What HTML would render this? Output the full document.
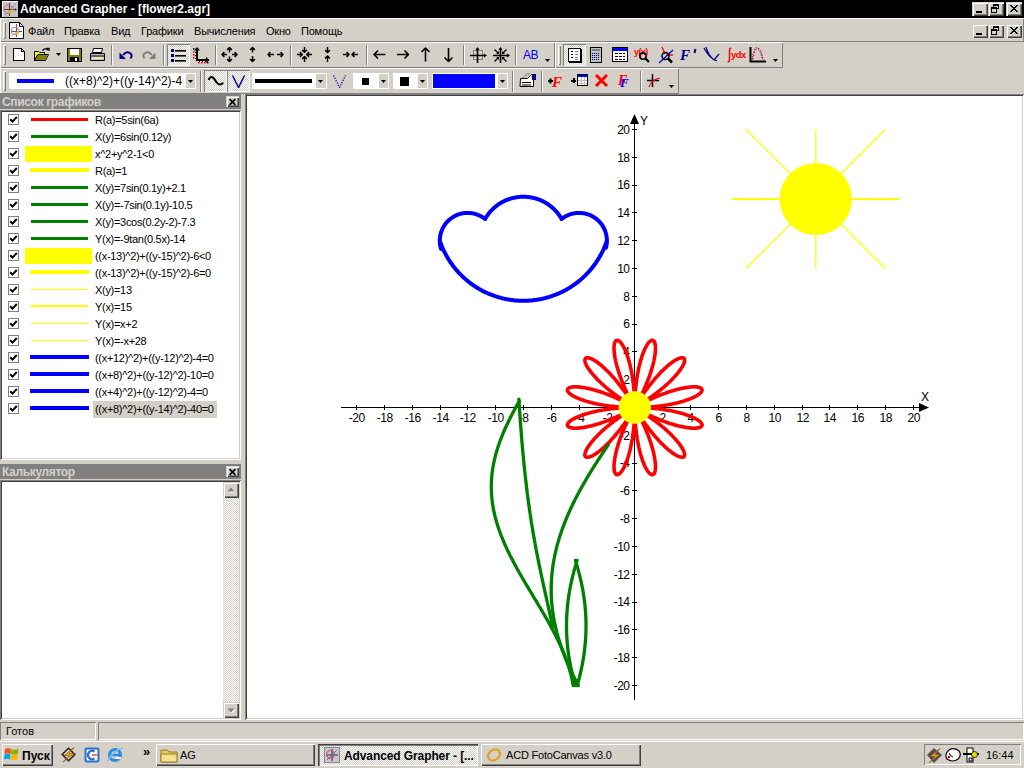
<!DOCTYPE html>
<html><head><meta charset="utf-8"><style>
html,body{margin:0;padding:0;}
body{width:1024px;height:768px;overflow:hidden;position:relative;background:#d4d0c8;font-family:'Liberation Sans', sans-serif;}
</style></head><body>
<div style="position:absolute;left:0px;top:0px;width:1024px;height:18px;background:#000;"></div><svg style="position:absolute;left:2px;top:1px" width="16" height="16" viewBox="0 0 16 16"><rect x="0" y="0" width="16" height="16" fill="#fff"/><rect x="1" y="1" width="15" height="15" fill="#c4c4c4"/><path d="M7.5 2v13M2 8.5h12" stroke="#404040" stroke-width="1"/><path d="M13 7l2 1.5l-2 1.5z" fill="#404040"/><circle cx="6" cy="8" r="4.2" fill="none" stroke="#e06080" stroke-width="1"/><path d="M3 14L14 3" stroke="#6060e0" stroke-width="1" stroke-dasharray="1 1"/><path d="M6 12L10.5 9" stroke="#f0c000" stroke-width="2"/></svg><div style="position:absolute;left:20px;top:2px;white-space:nowrap;font:bold 12px 'Liberation Sans', sans-serif;color:#fff;line-height:14px;">Advanced Grapher - [flower2.agr]</div><div style="position:absolute;left:972px;top:2px;width:16px;height:14px;background:#d4d0c8;box-shadow:inset 1px 1px #d4d0c8, inset 2px 2px #fff, inset -1px -1px #404040, inset -2px -2px #808080;"></div><div style="position:absolute;left:976px;top:11px;width:6px;height:2px;background:#000;"></div><div style="position:absolute;left:988px;top:2px;width:16px;height:14px;background:#d4d0c8;box-shadow:inset 1px 1px #d4d0c8, inset 2px 2px #fff, inset -1px -1px #404040, inset -2px -2px #808080;"></div><svg style="position:absolute;left:988px;top:2px" width="16" height="14" viewBox="0 0 16 14"><g shape-rendering="crispEdges" fill="#000"><rect x="5" y="2" width="6" height="2"/><rect x="10" y="4" width="1" height="3"/><rect x="9" y="6" width="2" height="1"/><rect x="3" y="5" width="6" height="2"/><rect x="3" y="7" width="1" height="4"/><rect x="8" y="7" width="1" height="4"/><rect x="3" y="10" width="6" height="1"/><rect x="5" y="4" width="1" height="1"/></g></svg><div style="position:absolute;left:1006px;top:2px;width:16px;height:14px;background:#d4d0c8;box-shadow:inset 1px 1px #d4d0c8, inset 2px 2px #fff, inset -1px -1px #404040, inset -2px -2px #808080;"></div><svg style="position:absolute;left:1006px;top:2px" width="16" height="14" viewBox="0 0 16 14"><path d="M4 3l7 7M11 3l-7 7M5 3l7 7M12 3l-7 7" stroke="#000" stroke-width="1"/></svg><div style="position:absolute;left:0px;top:18px;width:1024px;height:24px;box-shadow:inset 1px 1px #fff, inset -1px -1px #808080;background:#d4d0c8;"></div><div style="position:absolute;left:3px;top:22px;width:3px;height:17px;box-shadow:inset 1px 1px #fff, inset -1px -1px #808080;"></div><svg style="position:absolute;left:9px;top:22px" width="15" height="17" viewBox="0 0 15 17"><path d="M0.5 0.5h10l4 4v12h-14z" fill="#fff" stroke="#000"/><path d="M10.5 0.5v4h4" fill="none" stroke="#000"/><path d="M7.5 2v13M2 9.5h11" stroke="#406060" stroke-width="1"/><circle cx="6" cy="9" r="3.8" fill="none" stroke="#e06080"/><path d="M3 14l9-8" stroke="#a080ff" stroke-dasharray="1 1"/><path d="M6 12l4-2.5" stroke="#f0c000" stroke-width="2"/></svg><div style="position:absolute;left:28px;top:24px;white-space:nowrap;font:11px 'Liberation Sans', sans-serif;color:#000;letter-spacing:-0.2px;line-height:14px;">Файл</div><div style="position:absolute;left:64px;top:24px;white-space:nowrap;font:11px 'Liberation Sans', sans-serif;color:#000;letter-spacing:-0.2px;line-height:14px;">Правка</div><div style="position:absolute;left:111px;top:24px;white-space:nowrap;font:11px 'Liberation Sans', sans-serif;color:#000;letter-spacing:-0.2px;line-height:14px;">Вид</div><div style="position:absolute;left:141px;top:24px;white-space:nowrap;font:11px 'Liberation Sans', sans-serif;color:#000;letter-spacing:-0.2px;line-height:14px;">Графики</div><div style="position:absolute;left:194px;top:24px;white-space:nowrap;font:11px 'Liberation Sans', sans-serif;color:#000;letter-spacing:-0.2px;line-height:14px;">Вычисления</div><div style="position:absolute;left:266px;top:24px;white-space:nowrap;font:11px 'Liberation Sans', sans-serif;color:#000;letter-spacing:-0.2px;line-height:14px;">Окно</div><div style="position:absolute;left:301px;top:24px;white-space:nowrap;font:11px 'Liberation Sans', sans-serif;color:#000;letter-spacing:-0.2px;line-height:14px;">Помощь</div><div style="position:absolute;left:972px;top:24px;width:16px;height:14px;background:#d4d0c8;box-shadow:inset 1px 1px #d4d0c8, inset 2px 2px #fff, inset -1px -1px #404040, inset -2px -2px #808080;"></div><div style="position:absolute;left:976px;top:33px;width:6px;height:2px;background:#000;"></div><div style="position:absolute;left:988px;top:24px;width:16px;height:14px;background:#d4d0c8;box-shadow:inset 1px 1px #d4d0c8, inset 2px 2px #fff, inset -1px -1px #404040, inset -2px -2px #808080;"></div><svg style="position:absolute;left:988px;top:24px" width="16" height="14" viewBox="0 0 16 14"><g shape-rendering="crispEdges" fill="#000"><rect x="5" y="2" width="6" height="2"/><rect x="10" y="4" width="1" height="3"/><rect x="9" y="6" width="2" height="1"/><rect x="3" y="5" width="6" height="2"/><rect x="3" y="7" width="1" height="4"/><rect x="8" y="7" width="1" height="4"/><rect x="3" y="10" width="6" height="1"/><rect x="5" y="4" width="1" height="1"/></g></svg><div style="position:absolute;left:1006px;top:24px;width:16px;height:14px;background:#d4d0c8;box-shadow:inset 1px 1px #d4d0c8, inset 2px 2px #fff, inset -1px -1px #404040, inset -2px -2px #808080;"></div><svg style="position:absolute;left:1006px;top:24px" width="16" height="14" viewBox="0 0 16 14"><path d="M4 3l7 7M11 3l-7 7M5 3l7 7M12 3l-7 7" stroke="#000" stroke-width="1"/></svg><div style="position:absolute;left:0px;top:42px;width:555px;height:26px;box-shadow:inset 1px 1px #fff, inset -1px -1px #808080;background:#d4d0c8;"></div><div style="position:absolute;left:555px;top:42px;width:228px;height:26px;box-shadow:inset 1px 1px #fff, inset -1px -1px #808080;background:#d4d0c8;"></div><div style="position:absolute;left:3px;top:45px;width:3px;height:20px;box-shadow:inset 1px 1px #fff, inset -1px -1px #808080;"></div><div style="position:absolute;left:558px;top:45px;width:3px;height:20px;box-shadow:inset 1px 1px #fff, inset -1px -1px #808080;"></div><svg style="position:absolute;left:13px;top:48px" width="12" height="13" viewBox="0 0 12 13" shape-rendering="crispEdges"><path d="M0.5 0.5h8l3 3v9h-11z" fill="#fff" stroke="#000"/><path d="M8.5 0.5v3h3" fill="none" stroke="#000"/></svg><svg style="position:absolute;left:33px;top:47px" width="17" height="15" viewBox="0 0 17 15" ><path d="M1.5 4.5h4l1 1h5v2.5h-7l-3 5.5z" fill="#ffff00" stroke="#000"/><path d="M1.5 4.5v9h11l3-6h-10.5l-3.5 6" fill="none" stroke="#000"/><path d="M2.5 13l3-5h9.5l-2.8 5z" fill="#808000"/><path d="M9.5 3.5q2.5-3 5.5-0.5" fill="none" stroke="#000" stroke-width="1.3"/><path d="M13.5 1.5h2.5v2.5" fill="none" stroke="#000" stroke-width="1.3"/></svg><svg style="position:absolute;left:56px;top:53px" width="5" height="3" viewBox="0 0 5 3"><path d="M0,0h5l-2.5,3z" fill="#000"/></svg><svg style="position:absolute;left:67px;top:48px" width="15" height="14" viewBox="0 0 15 14" shape-rendering="crispEdges"><rect x="0.5" y="0.5" width="14" height="13" fill="#808000" stroke="#000"/><rect x="3" y="1" width="9" height="6" fill="#fff"/><rect x="3" y="9" width="9" height="4" fill="#000"/><rect x="8" y="10" width="2" height="3" fill="#fff"/></svg><svg style="position:absolute;left:89px;top:48px" width="17" height="14" viewBox="0 0 17 14" ><path d="M4.5 0.5h9l-1 4h-9z" fill="#fff" stroke="#000"/><path d="M1.5 5.5h14v7h-14z" fill="#c0c0c0" stroke="#000"/><path d="M2 8h13" stroke="#000"/><path d="M3 10h11" stroke="#fff"/><path d="M8 10h4" stroke="#ffff00"/><path d="M2 12.5h13" stroke="#000"/></svg><div style="position:absolute;left:111px;top:45px;width:1px;height:20px;background:#808080;"></div><div style="position:absolute;left:112px;top:45px;width:1px;height:20px;background:#fff;"></div><svg style="position:absolute;left:119px;top:50px" width="14" height="10" viewBox="0 0 14 10" ><path d="M4 5q4-5 8-1q1.5 2-0.5 4.5" fill="none" stroke="#000080" stroke-width="2"/><path d="M0.5 2.5v6.5h6.5z" fill="#000080"/></svg><svg style="position:absolute;left:142px;top:50px" width="14" height="10" viewBox="0 0 14 10" ><path d="M10 5q-4-5-8-1q-1.5 2 0.5 4.5" fill="none" stroke="#808080" stroke-width="2"/><path d="M13.5 2.5v6.5h-6.5z" fill="#808080"/></svg><div style="position:absolute;left:163px;top:45px;width:1px;height:20px;background:#808080;"></div><div style="position:absolute;left:164px;top:45px;width:1px;height:20px;background:#fff;"></div><div style="position:absolute;left:167px;top:44px;width:23px;height:22px;background-color:#fff;background-image:repeating-conic-gradient(#d4d0c8 0 25%, #fff 0 50%);background-size:2px 2px;box-shadow:inset 1px 1px #808080, inset -1px -1px #fff;"></div><svg style="position:absolute;left:171px;top:49px" width="15" height="13" viewBox="0 0 15 13" ><rect x="0" y="0" width="3" height="3" fill="#000080"/><rect x="0" y="5" width="3" height="3" fill="#000080"/><rect x="0" y="10" width="3" height="3" fill="#000080"/><rect x="4" y="1" width="11" height="1.6" fill="#000"/><rect x="4" y="6" width="11" height="1.6" fill="#000"/><rect x="4" y="11" width="11" height="1.6" fill="#000"/></svg><svg style="position:absolute;left:192px;top:46px" width="18" height="18" viewBox="0 0 18 18" ><rect x="4" y="2" width="2" height="13" fill="#000"/><rect x="4" y="13" width="13" height="2" fill="#000"/><path d="M2 4.5L5 1L8 4.5z M14 11l3.5 3l-3.5 3z" fill="#000"/><rect x="3" y="6" width="1" height="1" fill="#000"/><rect x="3" y="9" width="1" height="1" fill="#000"/><rect x="3" y="12" width="1" height="1" fill="#000"/><rect x="7" y="15" width="1" height="1" fill="#000"/><rect x="10" y="15" width="1" height="1" fill="#000"/><rect x="13" y="15" width="1" height="1" fill="#000"/><rect x="1" y="2" width="1.5" height="1.5" fill="#000080"/><rect x="1" y="5" width="1.5" height="1.5" fill="#ff0000"/><rect x="1" y="8" width="1.5" height="1.5" fill="#ff0000"/><rect x="1" y="11" width="1.5" height="1.5" fill="#ff0000"/><rect x="6" y="16" width="1.5" height="1.5" fill="#ff0000"/><rect x="9" y="16" width="1.5" height="1.5" fill="#ff0000"/><rect x="12" y="16" width="1.5" height="1.5" fill="#ff0000"/><rect x="15" y="16" width="1.5" height="1.5" fill="#000080"/></svg><div style="position:absolute;left:215px;top:45px;width:1px;height:20px;background:#808080;"></div><div style="position:absolute;left:216px;top:45px;width:1px;height:20px;background:#fff;"></div><svg style="position:absolute;left:0;top:0" width="1024" height="100"><path d="M229.50,52.50L229.50,48.10M231.90,49.90L229.50,47.50L227.10,49.90M229.50,56.50L229.50,60.90M227.10,59.10L229.50,61.50L231.90,59.10M227.00,54.50L222.60,54.50M224.40,52.10L222.00,54.50L224.40,56.90M232.00,54.50L236.40,54.50M234.60,56.90L237.00,54.50L234.60,52.10M252.50,52.50L252.50,48.10M254.90,49.90L252.50,47.50L250.10,49.90M252.50,56.00L252.50,60.90M250.10,59.10L252.50,61.50L254.90,59.10M274.00,54.50L268.60,54.50M270.40,52.10L268.00,54.50L270.40,56.90M277.00,54.50L282.40,54.50M280.60,56.90L283.00,54.50L280.60,52.10M304.50,47.00L304.50,51.70M302.10,49.90L304.50,52.30L306.90,49.90M304.50,62.00L304.50,57.10M306.90,58.90L304.50,56.50L302.10,58.90M297.00,54.50L301.70,54.50M299.90,56.90L302.30,54.50L299.90,52.10M312.00,54.50L307.30,54.50M309.10,52.10L306.70,54.50L309.10,56.90M327.50,47.00L327.50,51.90M325.10,50.10L327.50,52.50L329.90,50.10M327.50,62.00L327.50,56.60M329.90,58.40L327.50,56.00L325.10,58.40M343.00,54.50L348.40,54.50M346.60,56.90L349.00,54.50L346.60,52.10M358.00,54.50L352.60,54.50M354.40,52.10L352.00,54.50L354.40,56.90" fill="none" stroke="#000" stroke-width="1.5" stroke-linejoin="round" stroke-linecap="butt"/></svg><div style="position:absolute;left:290px;top:45px;width:1px;height:20px;background:#808080;"></div><div style="position:absolute;left:291px;top:45px;width:1px;height:20px;background:#fff;"></div><div style="position:absolute;left:366px;top:45px;width:1px;height:20px;background:#808080;"></div><div style="position:absolute;left:367px;top:45px;width:1px;height:20px;background:#fff;"></div><svg style="position:absolute;left:0;top:0" width="1024" height="100"><path d="M385.50,54.50L374.60,54.50M378.00,50.50L374.00,54.50L378.00,58.50M397.00,54.50L407.90,54.50M404.50,58.50L408.50,54.50L404.50,50.50M425.50,61.50L425.50,48.60M429.50,52.00L425.50,48.00L421.50,52.00M448.50,48.00L448.50,60.90M444.50,57.50L448.50,61.50L452.50,57.50" fill="none" stroke="#000" stroke-width="1.6" stroke-linejoin="round" stroke-linecap="butt"/></svg><div style="position:absolute;left:463px;top:45px;width:1px;height:20px;background:#808080;"></div><div style="position:absolute;left:464px;top:45px;width:1px;height:20px;background:#fff;"></div><svg style="position:absolute;left:466px;top:44px" width="48" height="22" viewBox="0 0 48 22" ><rect x="7.5" y="6.5" width="9" height="9" fill="none" stroke="#808080"/><path d="M11.5 4v15M4 11.5h15" stroke="#000" stroke-width="1.6"/><path d="M9.5 6l2-3l2 3zM18 9.5l3 2l-3 2z" fill="#000"/><path d="M34.5 4v15M27 11.5h15" stroke="#000" stroke-width="1.6"/><path d="M32.5 6l2-3l2 3zM41 9.5l3 2l-3 2z" fill="#000"/><path d="M28.5 5.5l4 4M40.5 5.5l-4 4M28.5 17.5l4-4M40.5 17.5l-4-4" stroke="#000" stroke-width="1.3"/><path d="M33 10l-3 0l3-3zM36 10l3 0l-3-3zM33 13l-3 0l3 3zM36 13l3 0l-3 3z" fill="#000"/></svg><div style="position:absolute;left:515px;top:45px;width:1px;height:20px;background:#808080;"></div><div style="position:absolute;left:516px;top:45px;width:1px;height:20px;background:#fff;"></div><div style="position:absolute;left:523px;top:48px;white-space:nowrap;font:12px 'Liberation Sans', sans-serif;color:#0000ff;line-height:14px;letter-spacing:-0.6px;">AB</div><svg style="position:absolute;left:545px;top:59px" width="5" height="3" viewBox="0 0 5 3"><path d="M0,0h5l-2.5,3z" fill="#000"/></svg><div style="position:absolute;left:563px;top:44px;width:23px;height:22px;background-color:#fff;background-image:repeating-conic-gradient(#d4d0c8 0 25%, #fff 0 50%);background-size:2px 2px;box-shadow:inset 1px 1px #808080, inset -1px -1px #fff;"></div><svg style="position:absolute;left:568px;top:48px" width="14" height="15" viewBox="0 0 14 15" shape-rendering="crispEdges"><rect x="0.5" y="0.5" width="12" height="13" fill="#fff" stroke="#000"/><rect x="13" y="1" width="1" height="14" fill="#000"/><rect x="1" y="14" width="13" height="1" fill="#000"/><path d="M3 3.5h2M3 6.5h2M3 9.5h2" stroke="#000"/><path d="M7 3.5h3M7 6.5h3M7 9.5h3M7 11.5h3" stroke="#808080"/></svg><svg style="position:absolute;left:590px;top:47px" width="12" height="16" viewBox="0 0 12 16" shape-rendering="crispEdges"><rect x="0.5" y="0.5" width="11" height="15" fill="#c0c0c0" stroke="#000"/><rect x="2" y="2" width="8" height="2" fill="#808080"/><path d="M2.5 6v8M4.5 6v8M6.5 6v8M8.5 6v8" stroke="#000080" stroke-dasharray="1 1"/></svg><svg style="position:absolute;left:612px;top:47px" width="16" height="15" viewBox="0 0 16 15" shape-rendering="crispEdges"><rect x="0.5" y="0.5" width="15" height="14" fill="#fff" stroke="#000"/><rect x="1" y="1" width="14" height="3" fill="#0000ff"/><path d="M3 6.5h3M7 6.5h3M11 6.5h2M3 9.5h3M7 9.5h3M11 9.5h2M3 12.5h3M7 12.5h3M11 12.5h2" stroke="#000"/></svg><svg style="position:absolute;left:634px;top:47px" width="17" height="16" viewBox="0 0 17 16" ><text x="0" y="8" font-family="Liberation Sans" font-size="9" font-weight="bold" fill="#ff0000" letter-spacing="-0.6">y(x)</text><circle cx="9" cy="9" r="3.2" fill="none" stroke="#000" stroke-width="1.5"/><path d="M11.5 11.5l3.5 3.5" stroke="#000" stroke-width="2.2"/></svg><svg style="position:absolute;left:658px;top:46px" width="16" height="18" viewBox="0 0 16 18" ><path d="M4 1l3 7M8 9l7 0" stroke="#ff0000" stroke-width="1.3"/><path d="M1 17L15 4" stroke="#0000ff" stroke-width="1.3"/><circle cx="7.5" cy="10" r="3.5" fill="none" stroke="#000" stroke-width="1.5"/><path d="M10 12.5l4 4" stroke="#000" stroke-width="2.5"/></svg><svg style="position:absolute;left:680px;top:47px" width="18" height="15" viewBox="0 0 18 15" ><text x="0" y="13" font-family="Liberation Serif" font-size="15" font-weight="bold" font-style="italic" fill="#000080">F</text><path d="M15.5 2l-1 4" stroke="#000080" stroke-width="2"/></svg><svg style="position:absolute;left:703px;top:46px" width="17" height="17" viewBox="0 0 17 17" ><path d="M1 2q5 10 13 13M3 1q2 8 8 13M11 14l5-6" fill="none" stroke="#000080" stroke-width="1.2"/></svg><svg style="position:absolute;left:726px;top:46px" width="22" height="17" viewBox="0 0 22 17" ><path d="M5.5 2.5q-1.5-1-2 1.5v10q-0.5 2.5-2 1.5" fill="none" stroke="#ff0000" stroke-width="1.5"/><text x="5" y="12" font-family="Liberation Sans" font-size="9.5" font-weight="bold" fill="#ff0000" letter-spacing="-0.5">ydx</text></svg><svg style="position:absolute;left:749px;top:47px" width="18" height="16" viewBox="0 0 18 16" ><path d="M1.5 0v14.5H17" fill="none" stroke="#000" stroke-width="2"/><path d="M3 13q2-13 5-12q4 0 6 12" fill="none" stroke="#ff0000" stroke-width="1.2" stroke-dasharray="1.5 1"/><path d="M4 12q2-10 4-10q3 0 5 10" fill="none" stroke="#0000ff" stroke-width="1" stroke-dasharray="1 2"/></svg><svg style="position:absolute;left:773px;top:59px" width="5" height="3" viewBox="0 0 5 3"><path d="M0,0h5l-2.5,3z" fill="#000"/></svg><div style="position:absolute;left:0px;top:68px;width:679px;height:26px;box-shadow:inset 1px 1px #fff, inset -1px -1px #808080;background:#d4d0c8;"></div><div style="position:absolute;left:3px;top:71px;width:3px;height:20px;box-shadow:inset 1px 1px #fff, inset -1px -1px #808080;"></div><div style="position:absolute;left:9px;top:73px;width:187px;height:16px;background:#fff;"></div><div style="position:absolute;left:17px;top:79px;width:37px;height:4px;background:#0000ff;"></div><div style="position:absolute;left:65px;top:74px;white-space:nowrap;font:12px 'Liberation Sans', sans-serif;color:#000;line-height:14px;letter-spacing:0px;">((x+8)^2)+((y-14)^2)-4</div><div style="position:absolute;left:186px;top:74px;width:9px;height:14px;background:#d4d0c8;"></div><svg style="position:absolute;left:188px;top:80px" width="5" height="3" viewBox="0 0 5 3"><path d="M0,0h5l-2.5,3z" fill="#000"/></svg><div style="position:absolute;left:196px;top:73px;width:0px;height:0px;"></div><div style="position:absolute;left:200px;top:71px;width:1px;height:21px;background:#808080;"></div><div style="position:absolute;left:201px;top:71px;width:1px;height:21px;background:#fff;"></div><div style="position:absolute;left:204px;top:70px;width:23px;height:22px;background-color:#fff;background-image:repeating-conic-gradient(#d4d0c8 0 25%, #fff 0 50%);background-size:2px 2px;box-shadow:inset 1px 1px #808080, inset -1px -1px #fff;"></div><div style="position:absolute;left:227px;top:70px;width:23px;height:22px;background-color:#fff;background-image:repeating-conic-gradient(#d4d0c8 0 25%, #fff 0 50%);background-size:2px 2px;box-shadow:inset 1px 1px #808080, inset -1px -1px #fff;"></div><svg style="position:absolute;left:207px;top:75px" width="17" height="12" viewBox="0 0 17 12" ><path d="M1.5 5q3-6 6.5 0t6.5 4q1 0 1.5-1.5" fill="none" stroke="#000" stroke-width="2"/></svg><svg style="position:absolute;left:231px;top:74px" width="15" height="14" viewBox="0 0 15 14" ><path d="M1.5 1.5l6 12l6-12" fill="none" stroke="#0000aa" stroke-width="1.5"/></svg><div style="position:absolute;left:252px;top:73px;width:75px;height:16px;background:#fff;"></div><div style="position:absolute;left:255px;top:79px;width:57px;height:4px;background:#000;"></div><div style="position:absolute;left:316px;top:74px;width:10px;height:14px;background:#d4d0c8;"></div><svg style="position:absolute;left:318px;top:80px" width="5" height="3" viewBox="0 0 5 3"><path d="M0,0h5l-2.5,3z" fill="#000"/></svg><svg style="position:absolute;left:332px;top:74px" width="15" height="14" viewBox="0 0 15 14" ><path d="M1.5 1.5l6 12l6-12" fill="none" stroke="#0000aa" stroke-width="1.3" stroke-dasharray="1.2 1.4"/></svg><div style="position:absolute;left:353px;top:73px;width:36px;height:16px;background:#fff;"></div><div style="position:absolute;left:362px;top:78px;width:7px;height:7px;background:#000;"></div><div style="position:absolute;left:379px;top:74px;width:9px;height:14px;background:#d4d0c8;"></div><svg style="position:absolute;left:381px;top:80px" width="5" height="3" viewBox="0 0 5 3"><path d="M0,0h5l-2.5,3z" fill="#000"/></svg><div style="position:absolute;left:393px;top:73px;width:35px;height:16px;background:#fff;"></div><div style="position:absolute;left:400px;top:77px;width:9px;height:9px;background:#000;"></div><div style="position:absolute;left:418px;top:74px;width:9px;height:14px;background:#d4d0c8;"></div><svg style="position:absolute;left:420px;top:80px" width="5" height="3" viewBox="0 0 5 3"><path d="M0,0h5l-2.5,3z" fill="#000"/></svg><div style="position:absolute;left:432px;top:73px;width:76px;height:16px;background:#fff;"></div><div style="position:absolute;left:433px;top:74px;width:62px;height:14px;background:#0000ff;"></div><div style="position:absolute;left:498px;top:74px;width:9px;height:14px;background:#d4d0c8;"></div><svg style="position:absolute;left:500px;top:80px" width="5" height="3" viewBox="0 0 5 3"><path d="M0,0h5l-2.5,3z" fill="#000"/></svg><div style="position:absolute;left:512px;top:71px;width:1px;height:21px;background:#808080;"></div><div style="position:absolute;left:513px;top:71px;width:1px;height:21px;background:#fff;"></div><svg style="position:absolute;left:519px;top:73px" width="17" height="15" viewBox="0 0 17 15" ><path d="M1.5 5.5h7l4-4h2v12h-13.5z" fill="#fff" stroke="#000"/><path d="M3 9.5h9M3 12h9" stroke="#000"/><path d="M4 5l5-5l4 4" fill="none" stroke="#808080" stroke-width="2" stroke-dasharray="1 1"/><rect x="13" y="1" width="4" height="6" fill="#000080"/></svg><div style="position:absolute;left:541px;top:71px;width:1px;height:21px;background:#808080;"></div><div style="position:absolute;left:542px;top:71px;width:1px;height:21px;background:#fff;"></div><svg style="position:absolute;left:547px;top:74px" width="18" height="14" viewBox="0 0 18 14" ><path d="M1 7h5M3.5 4.5v5" stroke="#000" stroke-width="2"/><text x="5" y="12.5" font-family="Liberation Serif" font-style="italic" font-weight="bold" font-size="15" fill="#ff0000">F</text></svg><svg style="position:absolute;left:570px;top:74px" width="18" height="13" viewBox="0 0 18 13" shape-rendering="crispEdges"><path d="M1 6.5h5M3.5 4v5" stroke="#000" stroke-width="2"/><rect x="7.5" y="0.5" width="10" height="11" fill="#fff" stroke="#000"/><rect x="8" y="1" width="9" height="2" fill="#0000ff"/><path d="M11 3v8M14 3v8M8 6.5h9M8 9h9" stroke="#c0c0c0"/></svg><svg style="position:absolute;left:594px;top:73px" width="15" height="15" viewBox="0 0 15 15" ><path d="M2 2l11 11M13 2l-11 11" stroke="#ff0000" stroke-width="3"/></svg><svg style="position:absolute;left:618px;top:74px" width="15" height="13" viewBox="0 0 15 13" ><text x="0" y="11" font-family="Liberation Serif" font-style="italic" font-weight="bold" font-size="14" fill="#ff0000">F</text><text x="2" y="13" font-family="Liberation Serif" font-style="italic" font-weight="bold" font-size="13" fill="#0000ff">F</text></svg><div style="position:absolute;left:640px;top:71px;width:1px;height:21px;background:#808080;"></div><div style="position:absolute;left:641px;top:71px;width:1px;height:21px;background:#fff;"></div><svg style="position:absolute;left:646px;top:73px" width="15" height="15" viewBox="0 0 15 15" ><path d="M6.5 1v13M1 7.5h12" stroke="#000" stroke-width="1.5"/><path d="M3 14q3-8 11-9" fill="none" stroke="#ff0000" stroke-width="1.2"/></svg><svg style="position:absolute;left:669px;top:85px" width="5" height="3" viewBox="0 0 5 3"><path d="M0,0h5l-2.5,3z" fill="#000"/></svg><div style="position:absolute;left:0px;top:93px;width:241px;height:16px;background:#808080;"></div><div style="position:absolute;left:2px;top:95px;white-space:nowrap;font:bold 12px 'Liberation Sans', sans-serif;color:#d4d0c8;line-height:14px;letter-spacing:-0.35px;">Список графиков</div><div style="position:absolute;left:226px;top:96px;width:13px;height:11px;background:#d4d0c8;box-shadow:inset 1px 1px #d4d0c8, inset 2px 2px #fff, inset -1px -1px #404040, inset -2px -2px #808080;"></div><svg style="position:absolute;left:226px;top:96px" width="13" height="11" viewBox="0 0 13 11"><path d="M3.6 3.2L9.4 8.8M9.4 3.2L3.6 8.8" stroke="#000" stroke-width="1.7"/></svg><div style="position:absolute;left:0px;top:110px;width:241px;height:350px;background:#fff;box-shadow:inset 1px 1px #808080, inset -1px -1px #fff, inset 2px 2px #404040, inset -2px -2px #d4d0c8;"></div><div style="position:absolute;left:8px;top:114px;width:11px;height:11px;box-sizing:border-box;border:1px solid #808080;background:#fff;"></div><svg style="position:absolute;left:8px;top:114px" width="11" height="11" viewBox="0 0 11 11"><path d="M2.2 5.2l2.3 2.4l4.3-4.6" fill="none" stroke="#000" stroke-width="2"/></svg><div style="position:absolute;left:31px;top:118px;width:57px;height:3px;background:#ff0000;"></div><div style="position:absolute;left:95px;top:113px;white-space:nowrap;font:11px 'Liberation Sans', sans-serif;color:#000;letter-spacing:-0.3px;line-height:14px;">R(a)=5sin(6a)</div><div style="position:absolute;left:8px;top:131px;width:11px;height:11px;box-sizing:border-box;border:1px solid #808080;background:#fff;"></div><svg style="position:absolute;left:8px;top:131px" width="11" height="11" viewBox="0 0 11 11"><path d="M2.2 5.2l2.3 2.4l4.3-4.6" fill="none" stroke="#000" stroke-width="2"/></svg><div style="position:absolute;left:31px;top:135px;width:57px;height:3px;background:#008000;"></div><div style="position:absolute;left:95px;top:130px;white-space:nowrap;font:11px 'Liberation Sans', sans-serif;color:#000;letter-spacing:-0.3px;line-height:14px;">X(y)=6sin(0.12y)</div><div style="position:absolute;left:8px;top:148px;width:11px;height:11px;box-sizing:border-box;border:1px solid #808080;background:#fff;"></div><svg style="position:absolute;left:8px;top:148px" width="11" height="11" viewBox="0 0 11 11"><path d="M2.2 5.2l2.3 2.4l4.3-4.6" fill="none" stroke="#000" stroke-width="2"/></svg><div style="position:absolute;left:25px;top:146px;width:67px;height:16px;background:#ffff00;"></div><div style="position:absolute;left:95px;top:147px;white-space:nowrap;font:11px 'Liberation Sans', sans-serif;color:#000;letter-spacing:-0.3px;line-height:14px;">x^2+y^2-1&lt;0</div><div style="position:absolute;left:8px;top:165px;width:11px;height:11px;box-sizing:border-box;border:1px solid #808080;background:#fff;"></div><svg style="position:absolute;left:8px;top:165px" width="11" height="11" viewBox="0 0 11 11"><path d="M2.2 5.2l2.3 2.4l4.3-4.6" fill="none" stroke="#000" stroke-width="2"/></svg><div style="position:absolute;left:30px;top:168px;width:59px;height:4px;background:#ffff00;"></div><div style="position:absolute;left:95px;top:164px;white-space:nowrap;font:11px 'Liberation Sans', sans-serif;color:#000;letter-spacing:-0.3px;line-height:14px;">R(a)=1</div><div style="position:absolute;left:8px;top:182px;width:11px;height:11px;box-sizing:border-box;border:1px solid #808080;background:#fff;"></div><svg style="position:absolute;left:8px;top:182px" width="11" height="11" viewBox="0 0 11 11"><path d="M2.2 5.2l2.3 2.4l4.3-4.6" fill="none" stroke="#000" stroke-width="2"/></svg><div style="position:absolute;left:31px;top:186px;width:57px;height:3px;background:#008000;"></div><div style="position:absolute;left:95px;top:181px;white-space:nowrap;font:11px 'Liberation Sans', sans-serif;color:#000;letter-spacing:-0.3px;line-height:14px;">X(y)=7sin(0.1y)+2.1</div><div style="position:absolute;left:8px;top:199px;width:11px;height:11px;box-sizing:border-box;border:1px solid #808080;background:#fff;"></div><svg style="position:absolute;left:8px;top:199px" width="11" height="11" viewBox="0 0 11 11"><path d="M2.2 5.2l2.3 2.4l4.3-4.6" fill="none" stroke="#000" stroke-width="2"/></svg><div style="position:absolute;left:31px;top:203px;width:57px;height:3px;background:#008000;"></div><div style="position:absolute;left:95px;top:198px;white-space:nowrap;font:11px 'Liberation Sans', sans-serif;color:#000;letter-spacing:-0.3px;line-height:14px;">X(y)=-7sin(0.1y)-10.5</div><div style="position:absolute;left:8px;top:216px;width:11px;height:11px;box-sizing:border-box;border:1px solid #808080;background:#fff;"></div><svg style="position:absolute;left:8px;top:216px" width="11" height="11" viewBox="0 0 11 11"><path d="M2.2 5.2l2.3 2.4l4.3-4.6" fill="none" stroke="#000" stroke-width="2"/></svg><div style="position:absolute;left:31px;top:220px;width:57px;height:3px;background:#008000;"></div><div style="position:absolute;left:95px;top:215px;white-space:nowrap;font:11px 'Liberation Sans', sans-serif;color:#000;letter-spacing:-0.3px;line-height:14px;">X(y)=3cos(0.2y-2)-7.3</div><div style="position:absolute;left:8px;top:233px;width:11px;height:11px;box-sizing:border-box;border:1px solid #808080;background:#fff;"></div><svg style="position:absolute;left:8px;top:233px" width="11" height="11" viewBox="0 0 11 11"><path d="M2.2 5.2l2.3 2.4l4.3-4.6" fill="none" stroke="#000" stroke-width="2"/></svg><div style="position:absolute;left:31px;top:237px;width:57px;height:3px;background:#008000;"></div><div style="position:absolute;left:95px;top:232px;white-space:nowrap;font:11px 'Liberation Sans', sans-serif;color:#000;letter-spacing:-0.3px;line-height:14px;">Y(x)=-9tan(0.5x)-14</div><div style="position:absolute;left:8px;top:250px;width:11px;height:11px;box-sizing:border-box;border:1px solid #808080;background:#fff;"></div><svg style="position:absolute;left:8px;top:250px" width="11" height="11" viewBox="0 0 11 11"><path d="M2.2 5.2l2.3 2.4l4.3-4.6" fill="none" stroke="#000" stroke-width="2"/></svg><div style="position:absolute;left:25px;top:248px;width:67px;height:16px;background:#ffff00;"></div><div style="position:absolute;left:95px;top:249px;white-space:nowrap;font:11px 'Liberation Sans', sans-serif;color:#000;letter-spacing:-0.3px;line-height:14px;">((x-13)^2)+((y-15)^2)-6&lt;0</div><div style="position:absolute;left:8px;top:267px;width:11px;height:11px;box-sizing:border-box;border:1px solid #808080;background:#fff;"></div><svg style="position:absolute;left:8px;top:267px" width="11" height="11" viewBox="0 0 11 11"><path d="M2.2 5.2l2.3 2.4l4.3-4.6" fill="none" stroke="#000" stroke-width="2"/></svg><div style="position:absolute;left:30px;top:270px;width:59px;height:4px;background:#ffff00;"></div><div style="position:absolute;left:95px;top:266px;white-space:nowrap;font:11px 'Liberation Sans', sans-serif;color:#000;letter-spacing:-0.3px;line-height:14px;">((x-13)^2)+((y-15)^2)-6=0</div><div style="position:absolute;left:8px;top:284px;width:11px;height:11px;box-sizing:border-box;border:1px solid #808080;background:#fff;"></div><svg style="position:absolute;left:8px;top:284px" width="11" height="11" viewBox="0 0 11 11"><path d="M2.2 5.2l2.3 2.4l4.3-4.6" fill="none" stroke="#000" stroke-width="2"/></svg><div style="position:absolute;left:31px;top:289px;width:57px;height:1px;background:#ffff00;"></div><div style="position:absolute;left:95px;top:283px;white-space:nowrap;font:11px 'Liberation Sans', sans-serif;color:#000;letter-spacing:-0.3px;line-height:14px;">X(y)=13</div><div style="position:absolute;left:8px;top:301px;width:11px;height:11px;box-sizing:border-box;border:1px solid #808080;background:#fff;"></div><svg style="position:absolute;left:8px;top:301px" width="11" height="11" viewBox="0 0 11 11"><path d="M2.2 5.2l2.3 2.4l4.3-4.6" fill="none" stroke="#000" stroke-width="2"/></svg><div style="position:absolute;left:31px;top:305px;width:57px;height:2px;background:#ffff00;"></div><div style="position:absolute;left:95px;top:300px;white-space:nowrap;font:11px 'Liberation Sans', sans-serif;color:#000;letter-spacing:-0.3px;line-height:14px;">Y(x)=15</div><div style="position:absolute;left:8px;top:318px;width:11px;height:11px;box-sizing:border-box;border:1px solid #808080;background:#fff;"></div><svg style="position:absolute;left:8px;top:318px" width="11" height="11" viewBox="0 0 11 11"><path d="M2.2 5.2l2.3 2.4l4.3-4.6" fill="none" stroke="#000" stroke-width="2"/></svg><div style="position:absolute;left:31px;top:323px;width:57px;height:1px;background:#ffff00;"></div><div style="position:absolute;left:95px;top:317px;white-space:nowrap;font:11px 'Liberation Sans', sans-serif;color:#000;letter-spacing:-0.3px;line-height:14px;">Y(x)=x+2</div><div style="position:absolute;left:8px;top:335px;width:11px;height:11px;box-sizing:border-box;border:1px solid #808080;background:#fff;"></div><svg style="position:absolute;left:8px;top:335px" width="11" height="11" viewBox="0 0 11 11"><path d="M2.2 5.2l2.3 2.4l4.3-4.6" fill="none" stroke="#000" stroke-width="2"/></svg><div style="position:absolute;left:31px;top:340px;width:57px;height:1px;background:#ffff00;"></div><div style="position:absolute;left:95px;top:334px;white-space:nowrap;font:11px 'Liberation Sans', sans-serif;color:#000;letter-spacing:-0.3px;line-height:14px;">Y(x)=-x+28</div><div style="position:absolute;left:8px;top:352px;width:11px;height:11px;box-sizing:border-box;border:1px solid #808080;background:#fff;"></div><svg style="position:absolute;left:8px;top:352px" width="11" height="11" viewBox="0 0 11 11"><path d="M2.2 5.2l2.3 2.4l4.3-4.6" fill="none" stroke="#000" stroke-width="2"/></svg><div style="position:absolute;left:30px;top:355px;width:59px;height:4px;background:#0000ff;"></div><div style="position:absolute;left:95px;top:351px;white-space:nowrap;font:11px 'Liberation Sans', sans-serif;color:#000;letter-spacing:-0.3px;line-height:14px;">((x+12)^2)+((y-12)^2)-4=0</div><div style="position:absolute;left:8px;top:369px;width:11px;height:11px;box-sizing:border-box;border:1px solid #808080;background:#fff;"></div><svg style="position:absolute;left:8px;top:369px" width="11" height="11" viewBox="0 0 11 11"><path d="M2.2 5.2l2.3 2.4l4.3-4.6" fill="none" stroke="#000" stroke-width="2"/></svg><div style="position:absolute;left:30px;top:372px;width:59px;height:4px;background:#0000ff;"></div><div style="position:absolute;left:95px;top:368px;white-space:nowrap;font:11px 'Liberation Sans', sans-serif;color:#000;letter-spacing:-0.3px;line-height:14px;">((x+8)^2)+((y-12)^2)-10=0</div><div style="position:absolute;left:8px;top:386px;width:11px;height:11px;box-sizing:border-box;border:1px solid #808080;background:#fff;"></div><svg style="position:absolute;left:8px;top:386px" width="11" height="11" viewBox="0 0 11 11"><path d="M2.2 5.2l2.3 2.4l4.3-4.6" fill="none" stroke="#000" stroke-width="2"/></svg><div style="position:absolute;left:30px;top:389px;width:59px;height:4px;background:#0000ff;"></div><div style="position:absolute;left:95px;top:385px;white-space:nowrap;font:11px 'Liberation Sans', sans-serif;color:#000;letter-spacing:-0.3px;line-height:14px;">((x+4)^2)+((y-12)^2)-4=0</div><div style="position:absolute;left:8px;top:403px;width:11px;height:11px;box-sizing:border-box;border:1px solid #808080;background:#fff;"></div><svg style="position:absolute;left:8px;top:403px" width="11" height="11" viewBox="0 0 11 11"><path d="M2.2 5.2l2.3 2.4l4.3-4.6" fill="none" stroke="#000" stroke-width="2"/></svg><div style="position:absolute;left:30px;top:406px;width:59px;height:4px;background:#0000ff;"></div><div style="position:absolute;left:93px;top:401px;width:124px;height:17px;background:#d4d0c8;"></div><div style="position:absolute;left:95px;top:402px;white-space:nowrap;font:11px 'Liberation Sans', sans-serif;color:#000;letter-spacing:-0.3px;line-height:14px;">((x+8)^2)+((y-14)^2)-40=0</div><div style="position:absolute;left:0px;top:464px;width:241px;height:15px;background:#808080;"></div><div style="position:absolute;left:2px;top:465px;white-space:nowrap;font:bold 12px 'Liberation Sans', sans-serif;color:#d4d0c8;line-height:14px;letter-spacing:-0.35px;">Калькулятор</div><div style="position:absolute;left:226px;top:466px;width:13px;height:11px;background:#d4d0c8;box-shadow:inset 1px 1px #d4d0c8, inset 2px 2px #fff, inset -1px -1px #404040, inset -2px -2px #808080;"></div><svg style="position:absolute;left:226px;top:466px" width="13" height="11" viewBox="0 0 13 11"><path d="M3.6 3.2L9.4 8.8M9.4 3.2L3.6 8.8" stroke="#000" stroke-width="1.7"/></svg><div style="position:absolute;left:0px;top:480px;width:241px;height:240px;background:#fff;box-shadow:inset 1px 1px #808080, inset -1px -1px #fff, inset 2px 2px #404040, inset -2px -2px #d4d0c8;"></div><div style="position:absolute;left:223px;top:482px;width:16px;height:236px;background-color:#fff;background-image:repeating-conic-gradient(#d4d0c8 0 25%, #fff 0 50%);background-size:2px 2px;"></div><div style="position:absolute;left:223px;top:482px;width:16px;height:16px;background:#d4d0c8;box-shadow:inset 1px 1px #d4d0c8, inset 2px 2px #fff, inset -1px -1px #404040, inset -2px -2px #808080;"></div><svg style="position:absolute;left:223px;top:482px" width="16" height="16" viewBox="0 0 16 16"><path d="M5.5 10.5h7l-3.5-4z" fill="#fff"/><path d="M4.5 9.5h7l-3.5-4z" fill="#808080"/></svg><div style="position:absolute;left:223px;top:702px;width:16px;height:16px;background:#d4d0c8;box-shadow:inset 1px 1px #d4d0c8, inset 2px 2px #fff, inset -1px -1px #404040, inset -2px -2px #808080;"></div><svg style="position:absolute;left:223px;top:702px" width="16" height="16" viewBox="0 0 16 16"><path d="M5.5 7.5h7l-3.5 4z" fill="#fff"/><path d="M4.5 6.5h7l-3.5 4z" fill="#808080"/></svg><div style="position:absolute;left:245px;top:94px;width:779px;height:626px;background:#fff;box-shadow:inset 1px 1px #808080, inset -1px -1px #fff, inset 2px 2px #404040, inset -2px -2px #d4d0c8;"></div><svg style="position:absolute;left:0;top:0" width="1024" height="768"><defs><clipPath id="gc"><rect x="247" y="96" width="775" height="622"/></clipPath></defs><g clip-path="url(#gc)"><g font-family="Liberation Sans, sans-serif" font-size="12px" letter-spacing="-0.5" fill="#000"><text x="356.7" y="422" text-anchor="middle">-20</text><text x="629.5" y="689.8" text-anchor="end">-20</text><text x="384.7" y="422" text-anchor="middle">-18</text><text x="629.5" y="662.0" text-anchor="end">-18</text><text x="412.7" y="422" text-anchor="middle">-16</text><text x="629.5" y="634.2" text-anchor="end">-16</text><text x="440.7" y="422" text-anchor="middle">-14</text><text x="629.5" y="606.4" text-anchor="end">-14</text><text x="467.7" y="422" text-anchor="middle">-12</text><text x="629.5" y="578.6" text-anchor="end">-12</text><text x="495.7" y="422" text-anchor="middle">-10</text><text x="629.5" y="550.8" text-anchor="end">-10</text><text x="523.7" y="422" text-anchor="middle">-8</text><text x="629.5" y="523.0" text-anchor="end">-8</text><text x="551.7" y="422" text-anchor="middle">-6</text><text x="629.5" y="495.2" text-anchor="end">-6</text><text x="579.7" y="422" text-anchor="middle">-4</text><text x="629.5" y="467.4" text-anchor="end">-4</text><text x="607.7" y="422" text-anchor="middle">-2</text><text x="629.5" y="439.6" text-anchor="end">-2</text><text x="662.7" y="422" text-anchor="middle">2</text><text x="629.5" y="384.0" text-anchor="end">2</text><text x="690.7" y="422" text-anchor="middle">4</text><text x="629.5" y="356.2" text-anchor="end">4</text><text x="718.7" y="422" text-anchor="middle">6</text><text x="629.5" y="328.4" text-anchor="end">6</text><text x="746.7" y="422" text-anchor="middle">8</text><text x="629.5" y="300.6" text-anchor="end">8</text><text x="774.7" y="422" text-anchor="middle">10</text><text x="629.5" y="272.8" text-anchor="end">10</text><text x="802.7" y="422" text-anchor="middle">12</text><text x="629.5" y="245.0" text-anchor="end">12</text><text x="829.7" y="422" text-anchor="middle">14</text><text x="629.5" y="217.2" text-anchor="end">14</text><text x="857.7" y="422" text-anchor="middle">16</text><text x="629.5" y="189.4" text-anchor="end">16</text><text x="885.7" y="422" text-anchor="middle">18</text><text x="629.5" y="161.6" text-anchor="end">18</text><text x="913.7" y="422" text-anchor="middle">20</text><text x="629.5" y="133.8" text-anchor="end">20</text><text x="921" y="401">X</text><text x="640" y="124.5">Y</text></g><path d="M341,407.5H921M634.5,700V122" stroke="#000" stroke-width="1" fill="none"/><path d="M919,403L929,407.5L919,412z" fill="#000"/><path d="M630,124L634.5,114L639,124z" fill="#000"/><path d="M356.5,405V410M632,685.5H637M384.5,405V410M632,657.5H637M412.5,405V410M632,629.5H637M440.5,405V410M632,602.5H637M467.5,405V410M632,574.5H637M495.5,405V410M632,546.5H637M523.5,405V410M632,518.5H637M551.5,405V410M632,490.5H637M579.5,405V410M632,463.5H637M607.5,405V410M632,435.5H637M662.5,405V410M632,379.5H637M690.5,405V410M632,351.5H637M718.5,405V410M632,324.5H637M746.5,405V410M632,296.5H637M774.5,405V410M632,268.5H637M802.5,405V410M632,240.5H637M829.5,405V410M632,212.5H637M857.5,405V410M632,185.5H637M885.5,405V410M632,157.5H637M913.5,405V410M632,129.5H637" stroke="#000" stroke-width="1"/><path d="M634.8,407.5L636.6,407.5L638.4,407.5L640.2,407.4L642.0,407.4L643.8,407.3L645.6,407.2L647.4,407.1L649.2,407.0L651.0,406.9L652.8,406.7L654.5,406.6L656.2,406.4L658.0,406.2L659.7,406.0L661.3,405.8L663.0,405.5L664.6,405.3L666.3,405.0L667.9,404.8L669.4,404.5L671.0,404.2L672.5,403.9L674.0,403.6L675.5,403.2L676.9,402.9L678.3,402.5L679.7,402.2L681.0,401.8L682.3,401.5L683.6,401.1L684.8,400.7L686.0,400.3L687.1,399.9L688.3,399.5L689.3,399.1L690.4,398.7L691.4,398.3L692.3,397.9L693.3,397.5L694.1,397.0L695.0,396.6L695.7,396.2L696.5,395.8L697.2,395.4L697.8,395.0L698.4,394.6L699.0,394.2L699.5,393.8L700.0,393.4L700.4,393.0L700.8,392.6L701.1,392.2L701.4,391.8L701.6,391.5L701.8,391.1L701.9,390.8L702.0,390.4L702.1,390.1L702.1,389.8L702.0,389.5L701.9,389.2L701.8,389.0L701.6,388.7L701.3,388.4L701.0,388.2L700.7,388.0L700.3,387.8L699.9,387.6L699.4,387.5L698.9,387.3L698.3,387.2L697.7,387.1L697.1,387.0L696.4,386.9L695.7,386.9L694.9,386.8L694.1,386.8L693.2,386.8L692.3,386.9L691.4,386.9L690.4,387.0L689.4,387.1L688.4,387.2L687.3,387.4L686.2,387.5L685.1,387.7L683.9,387.9L682.7,388.2L681.5,388.4L680.2,388.7L678.9,389.0L677.6,389.3L676.3,389.7L674.9,390.1L673.5,390.5L672.1,390.9L670.7,391.3L669.3,391.8L667.8,392.3L666.3,392.8L664.8,393.4L663.3,393.9L661.7,394.5L660.2,395.1L658.6,395.7L657.1,396.4L655.5,397.1L653.9,397.7L652.3,398.5L650.7,399.2L649.1,399.9L647.5,400.7L645.9,401.5L644.3,402.3L642.7,403.1L641.1,404.0L639.5,404.8L637.9,405.7L636.3,406.6L634.8,407.5L633.2,408.4L631.6,409.3L630.1,410.3L628.5,411.2L627.0,412.2L625.5,413.2L624.0,414.2L622.5,415.2L621.0,416.2L619.6,417.2L618.1,418.2L616.7,419.2L615.3,420.2L613.9,421.2L612.6,422.3L611.3,423.3L610.0,424.3L608.7,425.4L607.5,426.4L606.2,427.4L605.0,428.5L603.9,429.5L602.7,430.5L601.6,431.5L600.6,432.5L599.5,433.5L598.5,434.5L597.5,435.5L596.6,436.5L595.7,437.4L594.8,438.4L594.0,439.3L593.2,440.2L592.4,441.1L591.7,442.0L591.0,442.9L590.3,443.7L589.7,444.6L589.1,445.4L588.6,446.2L588.0,447.0L587.6,447.7L587.1,448.4L586.7,449.2L586.4,449.8L586.1,450.5L585.8,451.1L585.5,451.7L585.3,452.3L585.2,452.9L585.0,453.4L584.9,453.9L584.9,454.3L584.9,454.8L584.9,455.1L584.9,455.5L585.0,455.8L585.2,456.1L585.3,456.4L585.5,456.6L585.7,456.8L586.0,457.0L586.3,457.1L586.6,457.2L587.0,457.3L587.4,457.3L587.8,457.3L588.3,457.2L588.8,457.1L589.3,457.0L589.9,456.8L590.4,456.6L591.0,456.4L591.7,456.1L592.3,455.8L593.0,455.4L593.7,455.0L594.5,454.6L595.2,454.1L596.0,453.6L596.8,453.1L597.6,452.5L598.4,451.9L599.3,451.2L600.2,450.5L601.1,449.8L602.0,449.0L602.9,448.2L603.8,447.4L604.8,446.5L605.7,445.6L606.7,444.6L607.7,443.7L608.7,442.7L609.7,441.6L610.7,440.5L611.7,439.4L612.7,438.3L613.8,437.2L614.8,436.0L615.8,434.7L616.8,433.5L617.9,432.2L618.9,430.9L619.9,429.6L621.0,428.3L622.0,426.9L623.0,425.5L624.1,424.1L625.1,422.7L626.1,421.2L627.1,419.8L628.1,418.3L629.1,416.8L630.0,415.3L631.0,413.7L632.0,412.2L632.9,410.6L633.8,409.1L634.8,407.5L635.7,405.9L636.5,404.3L637.4,402.7L638.3,401.1L639.1,399.5L639.9,397.9L640.8,396.3L641.5,394.7L642.3,393.1L643.1,391.5L643.8,390.0L644.5,388.4L645.2,386.8L645.9,385.2L646.5,383.6L647.2,382.1L647.8,380.6L648.4,379.0L648.9,377.5L649.5,376.0L650.0,374.5L650.5,373.1L650.9,371.6L651.4,370.2L651.8,368.8L652.2,367.4L652.6,366.0L653.0,364.7L653.3,363.4L653.6,362.1L653.9,360.8L654.1,359.6L654.4,358.4L654.6,357.2L654.8,356.1L654.9,355.0L655.1,353.9L655.2,352.9L655.3,351.9L655.4,350.9L655.4,350.0L655.5,349.1L655.5,348.3L655.5,347.5L655.4,346.7L655.4,346.0L655.3,345.3L655.2,344.6L655.1,344.0L655.0,343.5L654.8,343.0L654.7,342.5L654.5,342.1L654.3,341.7L654.1,341.3L653.8,341.1L653.6,340.8L653.3,340.6L653.1,340.5L652.8,340.4L652.5,340.3L652.2,340.3L651.8,340.3L651.5,340.4L651.2,340.6L650.8,340.8L650.4,341.0L650.1,341.3L649.7,341.6L649.3,342.0L648.9,342.4L648.5,342.8L648.1,343.4L647.7,343.9L647.3,344.5L646.9,345.2L646.5,345.9L646.1,346.6L645.6,347.4L645.2,348.2L644.8,349.1L644.4,350.0L644.0,351.0L643.6,352.0L643.2,353.0L642.7,354.1L642.3,355.2L642.0,356.4L641.6,357.5L641.2,358.8L640.8,360.0L640.4,361.3L640.1,362.7L639.7,364.0L639.4,365.4L639.0,366.9L638.7,368.3L638.4,369.8L638.1,371.3L637.8,372.9L637.5,374.5L637.2,376.0L637.0,377.7L636.7,379.3L636.5,381.0L636.3,382.6L636.1,384.3L635.9,386.1L635.7,387.8L635.5,389.5L635.4,391.3L635.3,393.1L635.1,394.8L635.0,396.6L634.9,398.4L634.9,400.2L634.8,402.0L634.8,403.9L634.8,405.7L634.8,407.5L634.8,409.3L634.8,411.1L634.8,413.0L634.9,414.8L634.9,416.6L635.0,418.4L635.1,420.2L635.3,421.9L635.4,423.7L635.5,425.5L635.7,427.2L635.9,428.9L636.1,430.7L636.3,432.4L636.5,434.0L636.7,435.7L637.0,437.3L637.2,439.0L637.5,440.5L637.8,442.1L638.1,443.7L638.4,445.2L638.7,446.7L639.0,448.1L639.4,449.6L639.7,451.0L640.1,452.3L640.4,453.7L640.8,455.0L641.2,456.2L641.6,457.5L642.0,458.6L642.3,459.8L642.7,460.9L643.2,462.0L643.6,463.0L644.0,464.0L644.4,465.0L644.8,465.9L645.2,466.8L645.6,467.6L646.1,468.4L646.5,469.1L646.9,469.8L647.3,470.5L647.7,471.1L648.1,471.6L648.5,472.2L648.9,472.6L649.3,473.0L649.7,473.4L650.1,473.7L650.4,474.0L650.8,474.2L651.2,474.4L651.5,474.6L651.8,474.7L652.2,474.7L652.5,474.7L652.8,474.6L653.1,474.5L653.3,474.4L653.6,474.2L653.8,473.9L654.1,473.7L654.3,473.3L654.5,472.9L654.7,472.5L654.8,472.0L655.0,471.5L655.1,471.0L655.2,470.4L655.3,469.7L655.4,469.0L655.4,468.3L655.5,467.5L655.5,466.7L655.5,465.9L655.4,465.0L655.4,464.1L655.3,463.1L655.2,462.1L655.1,461.1L654.9,460.0L654.8,458.9L654.6,457.8L654.4,456.6L654.1,455.4L653.9,454.2L653.6,452.9L653.3,451.6L653.0,450.3L652.6,449.0L652.2,447.6L651.8,446.2L651.4,444.8L650.9,443.4L650.5,441.9L650.0,440.5L649.5,439.0L648.9,437.5L648.4,436.0L647.8,434.4L647.2,432.9L646.5,431.4L645.9,429.8L645.2,428.2L644.5,426.6L643.8,425.0L643.1,423.5L642.3,421.9L641.5,420.3L640.8,418.7L639.9,417.1L639.1,415.5L638.3,413.9L637.4,412.3L636.5,410.7L635.7,409.1L634.8,407.5L633.8,405.9L632.9,404.4L632.0,402.8L631.0,401.3L630.0,399.7L629.1,398.2L628.1,396.7L627.1,395.2L626.1,393.8L625.1,392.3L624.1,390.9L623.0,389.5L622.0,388.1L621.0,386.7L619.9,385.4L618.9,384.1L617.9,382.8L616.8,381.5L615.8,380.3L614.8,379.0L613.8,377.8L612.7,376.7L611.7,375.6L610.7,374.5L609.7,373.4L608.7,372.3L607.7,371.3L606.7,370.4L605.7,369.4L604.8,368.5L603.8,367.6L602.9,366.8L602.0,366.0L601.1,365.2L600.2,364.5L599.3,363.8L598.4,363.1L597.6,362.5L596.8,361.9L596.0,361.4L595.2,360.9L594.5,360.4L593.7,360.0L593.0,359.6L592.3,359.2L591.7,358.9L591.0,358.6L590.4,358.4L589.9,358.2L589.3,358.0L588.8,357.9L588.3,357.8L587.8,357.7L587.4,357.7L587.0,357.7L586.6,357.8L586.3,357.9L586.0,358.0L585.7,358.2L585.5,358.4L585.3,358.6L585.2,358.9L585.0,359.2L584.9,359.5L584.9,359.9L584.9,360.2L584.9,360.7L584.9,361.1L585.0,361.6L585.2,362.1L585.3,362.7L585.5,363.3L585.8,363.9L586.1,364.5L586.4,365.2L586.7,365.8L587.1,366.6L587.6,367.3L588.0,368.0L588.6,368.8L589.1,369.6L589.7,370.4L590.3,371.3L591.0,372.1L591.7,373.0L592.4,373.9L593.2,374.8L594.0,375.7L594.8,376.6L595.7,377.6L596.6,378.5L597.5,379.5L598.5,380.5L599.5,381.5L600.6,382.5L601.6,383.5L602.7,384.5L603.9,385.5L605.0,386.5L606.2,387.6L607.5,388.6L608.7,389.6L610.0,390.7L611.3,391.7L612.6,392.7L613.9,393.8L615.3,394.8L616.7,395.8L618.1,396.8L619.6,397.8L621.0,398.8L622.5,399.8L624.0,400.8L625.5,401.8L627.0,402.8L628.5,403.8L630.1,404.7L631.6,405.7L633.2,406.6L634.8,407.5L636.3,408.4L637.9,409.3L639.5,410.2L641.1,411.0L642.7,411.9L644.3,412.7L645.9,413.5L647.5,414.3L649.1,415.1L650.7,415.8L652.3,416.5L653.9,417.3L655.5,417.9L657.1,418.6L658.6,419.3L660.2,419.9L661.7,420.5L663.3,421.1L664.8,421.6L666.3,422.2L667.8,422.7L669.3,423.2L670.7,423.7L672.1,424.1L673.5,424.5L674.9,424.9L676.3,425.3L677.6,425.7L678.9,426.0L680.2,426.3L681.5,426.6L682.7,426.8L683.9,427.1L685.1,427.3L686.2,427.5L687.3,427.6L688.4,427.8L689.4,427.9L690.4,428.0L691.4,428.1L692.3,428.1L693.2,428.2L694.1,428.2L694.9,428.2L695.7,428.1L696.4,428.1L697.1,428.0L697.7,427.9L698.3,427.8L698.9,427.7L699.4,427.5L699.9,427.4L700.3,427.2L700.7,427.0L701.0,426.8L701.3,426.6L701.6,426.3L701.8,426.0L701.9,425.8L702.0,425.5L702.1,425.2L702.1,424.9L702.0,424.6L701.9,424.2L701.8,423.9L701.6,423.5L701.4,423.2L701.1,422.8L700.8,422.4L700.4,422.0L700.0,421.6L699.5,421.2L699.0,420.8L698.4,420.4L697.8,420.0L697.2,419.6L696.5,419.2L695.7,418.8L695.0,418.4L694.1,418.0L693.3,417.5L692.3,417.1L691.4,416.7L690.4,416.3L689.3,415.9L688.3,415.5L687.1,415.1L686.0,414.7L684.8,414.3L683.6,413.9L682.3,413.5L681.0,413.2L679.7,412.8L678.3,412.5L676.9,412.1L675.5,411.8L674.0,411.4L672.5,411.1L671.0,410.8L669.4,410.5L667.9,410.2L666.3,410.0L664.6,409.7L663.0,409.5L661.3,409.2L659.7,409.0L658.0,408.8L656.2,408.6L654.5,408.4L652.8,408.3L651.0,408.1L649.2,408.0L647.4,407.9L645.6,407.8L643.8,407.7L642.0,407.6L640.2,407.6L638.4,407.5L636.6,407.5L634.8,407.5L632.9,407.5L631.1,407.5L629.3,407.6L627.5,407.6L625.7,407.7L623.9,407.8L622.1,407.9L620.3,408.0L618.5,408.1L616.7,408.3L615.0,408.4L613.3,408.6L611.5,408.8L609.8,409.0L608.2,409.2L606.5,409.5L604.9,409.7L603.2,410.0L601.6,410.2L600.1,410.5L598.5,410.8L597.0,411.1L595.5,411.4L594.0,411.8L592.6,412.1L591.2,412.5L589.8,412.8L588.5,413.2L587.2,413.5L585.9,413.9L584.7,414.3L583.5,414.7L582.4,415.1L581.2,415.5L580.2,415.9L579.1,416.3L578.1,416.7L577.2,417.1L576.2,417.5L575.4,418.0L574.5,418.4L573.8,418.8L573.0,419.2L572.3,419.6L571.7,420.0L571.1,420.4L570.5,420.8L570.0,421.2L569.5,421.6L569.1,422.0L568.7,422.4L568.4,422.8L568.1,423.2L567.9,423.5L567.7,423.9L567.6,424.2L567.5,424.6L567.4,424.9L567.4,425.2L567.5,425.5L567.6,425.8L567.7,426.0L567.9,426.3L568.2,426.6L568.5,426.8L568.8,427.0L569.2,427.2L569.6,427.4L570.1,427.5L570.6,427.7L571.2,427.8L571.8,427.9L572.4,428.0L573.1,428.1L573.8,428.1L574.6,428.2L575.4,428.2L576.3,428.2L577.2,428.1L578.1,428.1L579.1,428.0L580.1,427.9L581.1,427.8L582.2,427.6L583.3,427.5L584.4,427.3L585.6,427.1L586.8,426.8L588.0,426.6L589.3,426.3L590.6,426.0L591.9,425.7L593.2,425.3L594.6,424.9L596.0,424.5L597.4,424.1L598.8,423.7L600.2,423.2L601.7,422.7L603.2,422.2L604.7,421.6L606.2,421.1L607.8,420.5L609.3,419.9L610.9,419.3L612.4,418.6L614.0,417.9L615.6,417.3L617.2,416.5L618.8,415.8L620.4,415.1L622.0,414.3L623.6,413.5L625.2,412.7L626.8,411.9L628.4,411.0L630.0,410.2L631.6,409.3L633.2,408.4L634.8,407.5L636.3,406.6L637.9,405.7L639.4,404.7L641.0,403.8L642.5,402.8L644.0,401.8L645.5,400.8L647.0,399.8L648.5,398.8L649.9,397.8L651.4,396.8L652.8,395.8L654.2,394.8L655.6,393.8L656.9,392.7L658.2,391.7L659.5,390.7L660.8,389.6L662.0,388.6L663.3,387.6L664.5,386.5L665.6,385.5L666.8,384.5L667.9,383.5L668.9,382.5L670.0,381.5L671.0,380.5L672.0,379.5L672.9,378.5L673.8,377.6L674.7,376.6L675.5,375.7L676.3,374.8L677.1,373.9L677.8,373.0L678.5,372.1L679.2,371.3L679.8,370.4L680.4,369.6L680.9,368.8L681.5,368.0L681.9,367.3L682.4,366.6L682.8,365.8L683.1,365.2L683.4,364.5L683.7,363.9L684.0,363.3L684.2,362.7L684.3,362.1L684.5,361.6L684.6,361.1L684.6,360.7L684.6,360.2L684.6,359.9L684.6,359.5L684.5,359.2L684.3,358.9L684.2,358.6L684.0,358.4L683.8,358.2L683.5,358.0L683.2,357.9L682.9,357.8L682.5,357.7L682.1,357.7L681.7,357.7L681.2,357.8L680.7,357.9L680.2,358.0L679.6,358.2L679.1,358.4L678.5,358.6L677.8,358.9L677.2,359.2L676.5,359.6L675.8,360.0L675.0,360.4L674.3,360.9L673.5,361.4L672.7,361.9L671.9,362.5L671.1,363.1L670.2,363.8L669.3,364.5L668.4,365.2L667.5,366.0L666.6,366.8L665.7,367.6L664.7,368.5L663.8,369.4L662.8,370.4L661.8,371.3L660.8,372.3L659.8,373.4L658.8,374.5L657.8,375.6L656.8,376.7L655.7,377.8L654.7,379.0L653.7,380.3L652.7,381.5L651.6,382.8L650.6,384.1L649.6,385.4L648.5,386.7L647.5,388.1L646.5,389.5L645.4,390.9L644.4,392.3L643.4,393.8L642.4,395.2L641.4,396.7L640.4,398.2L639.5,399.7L638.5,401.3L637.5,402.8L636.6,404.4L635.7,405.9L634.8,407.5L633.8,409.1L633.0,410.7L632.1,412.3L631.2,413.9L630.4,415.5L629.6,417.1L628.7,418.7L628.0,420.3L627.2,421.9L626.4,423.5L625.7,425.0L625.0,426.6L624.3,428.2L623.6,429.8L623.0,431.4L622.3,432.9L621.7,434.4L621.1,436.0L620.6,437.5L620.0,439.0L619.5,440.5L619.0,441.9L618.6,443.4L618.1,444.8L617.7,446.2L617.3,447.6L616.9,449.0L616.5,450.3L616.2,451.6L615.9,452.9L615.6,454.2L615.4,455.4L615.1,456.6L614.9,457.8L614.7,458.9L614.6,460.0L614.4,461.1L614.3,462.1L614.2,463.1L614.1,464.1L614.1,465.0L614.0,465.9L614.0,466.7L614.0,467.5L614.1,468.3L614.1,469.0L614.2,469.7L614.3,470.4L614.4,471.0L614.5,471.5L614.7,472.0L614.8,472.5L615.0,472.9L615.2,473.3L615.4,473.7L615.7,473.9L615.9,474.2L616.2,474.4L616.4,474.5L616.7,474.6L617.0,474.7L617.3,474.7L617.7,474.7L618.0,474.6L618.3,474.4L618.7,474.2L619.1,474.0L619.4,473.7L619.8,473.4L620.2,473.0L620.6,472.6L621.0,472.2L621.4,471.6L621.8,471.1L622.2,470.5L622.6,469.8L623.0,469.1L623.4,468.4L623.9,467.6L624.3,466.8L624.7,465.9L625.1,465.0L625.5,464.0L625.9,463.0L626.3,462.0L626.8,460.9L627.2,459.8L627.5,458.6L627.9,457.5L628.3,456.2L628.7,455.0L629.1,453.7L629.4,452.3L629.8,451.0L630.1,449.6L630.5,448.1L630.8,446.7L631.1,445.2L631.4,443.7L631.7,442.1L632.0,440.5L632.3,439.0L632.5,437.3L632.8,435.7L633.0,434.0L633.2,432.4L633.4,430.7L633.6,428.9L633.8,427.2L634.0,425.5L634.1,423.7L634.2,421.9L634.4,420.2L634.5,418.4L634.6,416.6L634.6,414.8L634.7,413.0L634.7,411.1L634.7,409.3L634.8,407.5L634.7,405.7L634.7,403.9L634.7,402.0L634.6,400.2L634.6,398.4L634.5,396.6L634.4,394.8L634.2,393.1L634.1,391.3L634.0,389.5L633.8,387.8L633.6,386.1L633.4,384.3L633.2,382.6L633.0,381.0L632.8,379.3L632.5,377.7L632.3,376.0L632.0,374.5L631.7,372.9L631.4,371.3L631.1,369.8L630.8,368.3L630.5,366.9L630.1,365.4L629.8,364.0L629.4,362.7L629.1,361.3L628.7,360.0L628.3,358.8L627.9,357.5L627.5,356.4L627.2,355.2L626.8,354.1L626.3,353.0L625.9,352.0L625.5,351.0L625.1,350.0L624.7,349.1L624.3,348.2L623.9,347.4L623.4,346.6L623.0,345.9L622.6,345.2L622.2,344.5L621.8,343.9L621.4,343.4L621.0,342.8L620.6,342.4L620.2,342.0L619.8,341.6L619.4,341.3L619.1,341.0L618.7,340.8L618.3,340.6L618.0,340.4L617.7,340.3L617.3,340.3L617.0,340.3L616.7,340.4L616.4,340.5L616.2,340.6L615.9,340.8L615.7,341.1L615.4,341.3L615.2,341.7L615.0,342.1L614.8,342.5L614.7,343.0L614.5,343.5L614.4,344.0L614.3,344.6L614.2,345.3L614.1,346.0L614.1,346.7L614.0,347.5L614.0,348.3L614.0,349.1L614.1,350.0L614.1,350.9L614.2,351.9L614.3,352.9L614.4,353.9L614.6,355.0L614.7,356.1L614.9,357.2L615.1,358.4L615.4,359.6L615.6,360.8L615.9,362.1L616.2,363.4L616.5,364.7L616.9,366.0L617.3,367.4L617.7,368.8L618.1,370.2L618.6,371.6L619.0,373.1L619.5,374.5L620.0,376.0L620.6,377.5L621.1,379.0L621.7,380.6L622.3,382.1L623.0,383.6L623.6,385.2L624.3,386.8L625.0,388.4L625.7,390.0L626.4,391.5L627.2,393.1L628.0,394.7L628.7,396.3L629.6,397.9L630.4,399.5L631.2,401.1L632.1,402.7L633.0,404.3L633.8,405.9L634.8,407.5L635.7,409.1L636.6,410.6L637.5,412.2L638.5,413.7L639.5,415.3L640.4,416.8L641.4,418.3L642.4,419.8L643.4,421.2L644.4,422.7L645.4,424.1L646.5,425.5L647.5,426.9L648.5,428.3L649.6,429.6L650.6,430.9L651.6,432.2L652.7,433.5L653.7,434.7L654.7,436.0L655.7,437.2L656.8,438.3L657.8,439.4L658.8,440.5L659.8,441.6L660.8,442.7L661.8,443.7L662.8,444.6L663.8,445.6L664.7,446.5L665.7,447.4L666.6,448.2L667.5,449.0L668.4,449.8L669.3,450.5L670.2,451.2L671.1,451.9L671.9,452.5L672.7,453.1L673.5,453.6L674.3,454.1L675.0,454.6L675.8,455.0L676.5,455.4L677.2,455.8L677.8,456.1L678.5,456.4L679.1,456.6L679.6,456.8L680.2,457.0L680.7,457.1L681.2,457.2L681.7,457.3L682.1,457.3L682.5,457.3L682.9,457.2L683.2,457.1L683.5,457.0L683.8,456.8L684.0,456.6L684.2,456.4L684.3,456.1L684.5,455.8L684.6,455.5L684.6,455.1L684.6,454.8L684.6,454.3L684.6,453.9L684.5,453.4L684.3,452.9L684.2,452.3L684.0,451.7L683.7,451.1L683.4,450.5L683.1,449.8L682.8,449.2L682.4,448.4L681.9,447.7L681.5,447.0L680.9,446.2L680.4,445.4L679.8,444.6L679.2,443.7L678.5,442.9L677.8,442.0L677.1,441.1L676.3,440.2L675.5,439.3L674.7,438.4L673.8,437.4L672.9,436.5L672.0,435.5L671.0,434.5L670.0,433.5L668.9,432.5L667.9,431.5L666.8,430.5L665.6,429.5L664.5,428.5L663.3,427.4L662.0,426.4L660.8,425.4L659.5,424.3L658.2,423.3L656.9,422.3L655.6,421.2L654.2,420.2L652.8,419.2L651.4,418.2L649.9,417.2L648.5,416.2L647.0,415.2L645.5,414.2L644.0,413.2L642.5,412.2L641.0,411.2L639.4,410.3L637.9,409.3L636.3,408.4L634.8,407.5L633.2,406.6L631.6,405.7L630.0,404.8L628.4,404.0L626.8,403.1L625.2,402.3L623.6,401.5L622.0,400.7L620.4,399.9L618.8,399.2L617.2,398.5L615.6,397.7L614.0,397.1L612.4,396.4L610.9,395.7L609.3,395.1L607.8,394.5L606.2,393.9L604.7,393.4L603.2,392.8L601.7,392.3L600.2,391.8L598.8,391.3L597.4,390.9L596.0,390.5L594.6,390.1L593.2,389.7L591.9,389.3L590.6,389.0L589.3,388.7L588.0,388.4L586.8,388.2L585.6,387.9L584.4,387.7L583.3,387.5L582.2,387.4L581.1,387.2L580.1,387.1L579.1,387.0L578.1,386.9L577.2,386.9L576.3,386.8L575.4,386.8L574.6,386.8L573.8,386.9L573.1,386.9L572.4,387.0L571.8,387.1L571.2,387.2L570.6,387.3L570.1,387.5L569.6,387.6L569.2,387.8L568.8,388.0L568.5,388.2L568.2,388.4L567.9,388.7L567.7,389.0L567.6,389.2L567.5,389.5L567.4,389.8L567.4,390.1L567.5,390.4L567.6,390.8L567.7,391.1L567.9,391.5L568.1,391.8L568.4,392.2L568.7,392.6L569.1,393.0L569.5,393.4L570.0,393.8L570.5,394.2L571.1,394.6L571.7,395.0L572.3,395.4L573.0,395.8L573.8,396.2L574.5,396.6L575.4,397.0L576.2,397.5L577.2,397.9L578.1,398.3L579.1,398.7L580.2,399.1L581.2,399.5L582.4,399.9L583.5,400.3L584.7,400.7L585.9,401.1L587.2,401.5L588.5,401.8L589.8,402.2L591.2,402.5L592.6,402.9L594.0,403.2L595.5,403.6L597.0,403.9L598.5,404.2L600.1,404.5L601.6,404.8L603.2,405.0L604.9,405.3L606.5,405.5L608.2,405.8L609.8,406.0L611.5,406.2L613.3,406.4L615.0,406.6L616.7,406.7L618.5,406.9L620.3,407.0L622.1,407.1L623.9,407.2L625.7,407.3L627.5,407.4L629.3,407.4L631.1,407.5L632.9,407.5L634.7,407.5" fill="none" stroke="#ff0000" stroke-width="3.6" stroke-linejoin="round" stroke-linecap="round"/><path d="M578.3,685.5L578.0,684.9L577.7,684.3L577.4,683.7L577.0,683.1L576.7,682.5L576.4,681.9L576.1,681.3L575.8,680.7L575.5,680.1L575.2,679.5L574.9,678.9L574.6,678.3L574.3,677.7L574.0,677.1L573.7,676.5L573.4,675.9L573.1,675.3L572.8,674.7L572.5,674.1L572.2,673.5L571.9,672.9L571.7,672.3L571.4,671.7L571.1,671.1L570.8,670.5L570.5,669.9L570.3,669.3L570.0,668.7L569.7,668.1L569.4,667.5L569.2,666.9L568.9,666.3L568.6,665.7L568.4,665.1L568.1,664.5L567.9,663.9L567.6,663.3L567.3,662.7L567.1,662.1L566.8,661.5L566.6,660.9L566.3,660.3L566.1,659.6L565.8,659.0L565.6,658.4L565.3,657.8L565.1,657.2L564.9,656.6L564.6,656.0L564.4,655.4L564.2,654.8L563.9,654.2L563.7,653.6L563.5,653.0L563.3,652.4L563.0,651.8L562.8,651.2L562.6,650.6L562.4,650.0L562.2,649.4L561.9,648.8L561.7,648.2L561.5,647.6L561.3,647.0L561.1,646.4L560.9,645.8L560.7,645.2L560.5,644.6L560.3,644.0L560.1,643.4L559.9,642.8L559.7,642.2L559.5,641.6L559.3,641.0L559.2,640.4L559.0,639.8L558.8,639.2L558.6,638.6L558.4,638.0L558.3,637.4L558.1,636.8L557.9,636.2L557.7,635.6L557.6,635.0L557.4,634.4L557.2,633.8L557.1,633.2L556.9,632.6L556.8,632.0L556.6,631.4L556.5,630.8L556.3,630.2L556.2,629.6L556.0,629.0L555.9,628.4L555.7,627.8L555.6,627.2L555.5,626.6L555.3,626.0L555.2,625.4L555.1,624.8L554.9,624.2L554.8,623.6L554.7,623.0L554.6,622.4L554.4,621.8L554.3,621.2L554.2,620.6L554.1,620.0L554.0,619.4L553.9,618.8L553.8,618.2L553.6,617.6L553.5,617.0L553.4,616.4L553.3,615.8L553.2,615.2L553.2,614.6L553.1,614.0L553.0,613.4L552.9,612.8L552.8,612.2L552.7,611.6L552.6,611.0L552.6,610.4L552.5,609.8L552.4,609.2L552.3,608.5L552.3,607.9L552.2,607.3L552.1,606.7L552.1,606.1L552.0,605.5L551.9,604.9L551.9,604.3L551.8,603.7L551.8,603.1L551.7,602.5L551.7,601.9L551.6,601.3L551.6,600.7L551.6,600.1L551.5,599.5L551.5,598.9L551.4,598.3L551.4,597.7L551.4,597.1L551.4,596.5L551.3,595.9L551.3,595.3L551.3,594.7L551.3,594.1L551.3,593.5L551.2,592.9L551.2,592.3L551.2,591.7L551.2,591.1L551.2,590.5L551.2,589.9L551.2,589.3L551.2,588.7L551.2,588.1L551.2,587.5L551.2,586.9L551.2,586.3L551.2,585.7L551.3,585.1L551.3,584.5L551.3,583.9L551.3,583.3L551.3,582.7L551.4,582.1L551.4,581.5L551.4,580.9L551.5,580.3L551.5,579.7L551.5,579.1L551.6,578.5L551.6,577.9L551.7,577.3L551.7,576.7L551.8,576.1L551.8,575.5L551.9,574.9L551.9,574.3L552.0,573.7L552.0,573.1L552.1,572.5L552.2,571.9L552.2,571.3L552.3,570.7L552.4,570.1L552.4,569.5L552.5,568.9L552.6,568.3L552.7,567.7L552.8,567.1L552.8,566.5L552.9,565.9L553.0,565.3L553.1,564.7L553.2,564.1L553.3,563.5L553.4,562.9L553.5,562.3L553.6,561.7L553.7,561.1L553.8,560.5L553.9,559.9L554.0,559.3L554.1,558.7L554.3,558.1L554.4,557.4L554.5,556.8L554.6,556.2L554.7,555.6L554.9,555.0L555.0,554.4L555.1,553.8L555.2,553.2L555.4,552.6L555.5,552.0L555.7,551.4L555.8,550.8L555.9,550.2L556.1,549.6L556.2,549.0L556.4,548.4L556.5,547.8L556.7,547.2L556.8,546.6L557.0,546.0L557.2,545.4L557.3,544.8L557.5,544.2L557.7,543.6L557.8,543.0L558.0,542.4L558.2,541.8L558.3,541.2L558.5,540.6L558.7,540.0L558.9,539.4L559.1,538.8L559.2,538.2L559.4,537.6L559.6,537.0L559.8,536.4L560.0,535.8L560.2,535.2L560.4,534.6L560.6,534.0L560.8,533.4L561.0,532.8L561.2,532.2L561.4,531.6L561.6,531.0L561.8,530.4L562.0,529.8L562.3,529.2L562.5,528.6L562.7,528.0L562.9,527.4L563.1,526.8L563.4,526.2L563.6,525.6L563.8,525.0L564.0,524.4L564.3,523.8L564.5,523.2L564.7,522.6L565.0,522.0L565.2,521.4L565.5,520.8L565.7,520.2L565.9,519.6L566.2,519.0L566.4,518.4L566.7,517.8L566.9,517.2L567.2,516.6L567.5,516.0L567.7,515.4L568.0,514.8L568.2,514.2L568.5,513.6L568.8,513.0L569.0,512.4L569.3,511.8L569.6,511.2L569.8,510.6L570.1,510.0L570.4,509.4L570.7,508.8L570.9,508.2L571.2,507.6L571.5,507.0L571.8,506.3L572.1,505.7L572.4,505.1L572.7,504.5L572.9,503.9L573.2,503.3L573.5,502.7L573.8,502.1L574.1,501.5L574.4,500.9L574.7,500.3L575.0,499.7L575.3,499.1L575.6,498.5L575.9,497.9L576.3,497.3L576.6,496.7L576.9,496.1L577.2,495.5L577.5,494.9L577.8,494.3L578.1,493.7L578.5,493.1L578.8,492.5L579.1,491.9L579.4,491.3L579.8,490.7L580.1,490.1L580.4,489.5L580.7,488.9L581.1,488.3L581.4,487.7L581.7,487.1L582.1,486.5L582.4,485.9L582.8,485.3L583.1,484.7L583.4,484.1L583.8,483.5L584.1,482.9L584.5,482.3L584.8,481.7L585.2,481.1L585.5,480.5L585.9,479.9L586.2,479.3L586.6,478.7L586.9,478.1L587.3,477.5L587.6,476.9L588.0,476.3L588.4,475.7L588.7,475.1L589.1,474.5L589.4,473.9L589.8,473.3L590.2,472.7L590.5,472.1L590.9,471.5L591.3,470.9L591.7,470.3L592.0,469.7L592.4,469.1L592.8,468.5L593.1,467.9L593.5,467.3L593.9,466.7L594.3,466.1L594.7,465.5L595.0,464.9L595.4,464.3L595.8,463.7L596.2,463.1L596.6,462.5L597.0,461.9L597.3,461.3L597.7,460.7L598.1,460.1L598.5,459.5L598.9,458.9L599.3,458.3L599.7,457.7L600.1,457.1L600.5,456.5L600.9,455.9L601.3,455.2L601.7,454.6L602.1,454.0L602.5,453.4L602.9,452.8L603.3,452.2L603.7,451.6L604.1,451.0L604.5,450.4L604.9,449.8L605.3,449.2L605.7,448.6L606.1,448.0L606.5,447.4L606.9,446.8L607.3,446.2L607.7,445.6L608.2,445.0" fill="none" stroke="#008000" stroke-width="3.3" stroke-linejoin="round" stroke-linecap="round"/><circle cx="634.75" cy="407.5" r="13.93" fill="#ffff00" stroke="#ffff00" stroke-width="4.6"/><path d="M575.4,685.5L575.3,685.2L575.2,684.9L575.1,684.6L575.0,684.2L574.9,683.9L574.8,683.6L574.7,683.3L574.6,683.0L574.6,682.7L574.5,682.4L574.4,682.1L574.3,681.7L574.2,681.4L574.1,681.1L574.0,680.8L574.0,680.5L573.9,680.2L573.8,679.9L573.7,679.6L573.6,679.2L573.5,678.9L573.5,678.6L573.4,678.3L573.3,678.0L573.2,677.7L573.1,677.4L573.1,677.1L573.0,676.7L572.9,676.4L572.8,676.1L572.7,675.8L572.7,675.5L572.6,675.2L572.5,674.9L572.4,674.6L572.4,674.2L572.3,673.9L572.2,673.6L572.1,673.3L572.1,673.0L572.0,672.7L571.9,672.4L571.9,672.1L571.8,671.7L571.7,671.4L571.6,671.1L571.6,670.8L571.5,670.5L571.4,670.2L571.4,669.9L571.3,669.5L571.2,669.2L571.2,668.9L571.1,668.6L571.0,668.3L571.0,668.0L570.9,667.7L570.8,667.4L570.8,667.0L570.7,666.7L570.6,666.4L570.6,666.1L570.5,665.8L570.5,665.5L570.4,665.2L570.3,664.9L570.3,664.5L570.2,664.2L570.2,663.9L570.1,663.6L570.0,663.3L570.0,663.0L569.9,662.7L569.9,662.4L569.8,662.0L569.7,661.7L569.7,661.4L569.6,661.1L569.6,660.8L569.5,660.5L569.5,660.2L569.4,659.9L569.4,659.5L569.3,659.2L569.3,658.9L569.2,658.6L569.2,658.3L569.1,658.0L569.1,657.7L569.0,657.4L569.0,657.0L568.9,656.7L568.9,656.4L568.8,656.1L568.8,655.8L568.7,655.5L568.7,655.2L568.6,654.9L568.6,654.5L568.5,654.2L568.5,653.9L568.5,653.6L568.4,653.3L568.4,653.0L568.3,652.7L568.3,652.3L568.2,652.0L568.2,651.7L568.2,651.4L568.1,651.1L568.1,650.8L568.0,650.5L568.0,650.2L568.0,649.8L567.9,649.5L567.9,649.2L567.9,648.9L567.8,648.6L567.8,648.3L567.8,648.0L567.7,647.7L567.7,647.3L567.6,647.0L567.6,646.7L567.6,646.4L567.6,646.1L567.5,645.8L567.5,645.5L567.5,645.2L567.4,644.8L567.4,644.5L567.4,644.2L567.3,643.9L567.3,643.6L567.3,643.3L567.3,643.0L567.2,642.7L567.2,642.3L567.2,642.0L567.2,641.7L567.1,641.4L567.1,641.1L567.1,640.8L567.1,640.5L567.0,640.2L567.0,639.8L567.0,639.5L567.0,639.2L566.9,638.9L566.9,638.6L566.9,638.3L566.9,638.0L566.9,637.6L566.9,637.3L566.8,637.0L566.8,636.7L566.8,636.4L566.8,636.1L566.8,635.8L566.8,635.5L566.7,635.1L566.7,634.8L566.7,634.5L566.7,634.2L566.7,633.9L566.7,633.6L566.7,633.3L566.6,633.0L566.6,632.6L566.6,632.3L566.6,632.0L566.6,631.7L566.6,631.4L566.6,631.1L566.6,630.8L566.6,630.5L566.6,630.1L566.6,629.8L566.6,629.5L566.5,629.2L566.5,628.9L566.5,628.6L566.5,628.3L566.5,628.0L566.5,627.6L566.5,627.3L566.5,627.0L566.5,626.7L566.5,626.4L566.5,626.1L566.5,625.8L566.5,625.5L566.5,625.1L566.5,624.8L566.5,624.5L566.5,624.2L566.5,623.9L566.5,623.6L566.5,623.3L566.5,623.0L566.5,622.6L566.5,622.3L566.6,622.0L566.6,621.7L566.6,621.4L566.6,621.1L566.6,620.8L566.6,620.4L566.6,620.1L566.6,619.8L566.6,619.5L566.6,619.2L566.6,618.9L566.7,618.6L566.7,618.3L566.7,617.9L566.7,617.6L566.7,617.3L566.7,617.0L566.7,616.7L566.7,616.4L566.8,616.1L566.8,615.8L566.8,615.4L566.8,615.1L566.8,614.8L566.8,614.5L566.9,614.2L566.9,613.9L566.9,613.6L566.9,613.3L566.9,612.9L567.0,612.6L567.0,612.3L567.0,612.0L567.0,611.7L567.0,611.4L567.1,611.1L567.1,610.8L567.1,610.4L567.1,610.1L567.2,609.8L567.2,609.5L567.2,609.2L567.2,608.9L567.3,608.6L567.3,608.3L567.3,607.9L567.4,607.6L567.4,607.3L567.4,607.0L567.4,606.7L567.5,606.4L567.5,606.1L567.5,605.7L567.6,605.4L567.6,605.1L567.6,604.8L567.7,604.5L567.7,604.2L567.7,603.9L567.8,603.6L567.8,603.2L567.8,602.9L567.9,602.6L567.9,602.3L567.9,602.0L568.0,601.7L568.0,601.4L568.1,601.1L568.1,600.7L568.1,600.4L568.2,600.1L568.2,599.8L568.3,599.5L568.3,599.2L568.3,598.9L568.4,598.6L568.4,598.2L568.5,597.9L568.5,597.6L568.6,597.3L568.6,597.0L568.7,596.7L568.7,596.4L568.7,596.1L568.8,595.7L568.8,595.4L568.9,595.1L568.9,594.8L569.0,594.5L569.0,594.2L569.1,593.9L569.1,593.6L569.2,593.2L569.2,592.9L569.3,592.6L569.3,592.3L569.4,592.0L569.4,591.7L569.5,591.4L569.6,591.0L569.6,590.7L569.7,590.4L569.7,590.1L569.8,589.8L569.8,589.5L569.9,589.2L569.9,588.9L570.0,588.5L570.1,588.2L570.1,587.9L570.2,587.6L570.2,587.3L570.3,587.0L570.4,586.7L570.4,586.4L570.5,586.0L570.5,585.7L570.6,585.4L570.7,585.1L570.7,584.8L570.8,584.5L570.9,584.2L570.9,583.9L571.0,583.5L571.1,583.2L571.1,582.9L571.2,582.6L571.3,582.3L571.3,582.0L571.4,581.7L571.5,581.4L571.5,581.0L571.6,580.7L571.7,580.4L571.7,580.1L571.8,579.8L571.9,579.5L572.0,579.2L572.0,578.9L572.1,578.5L572.2,578.2L572.3,577.9L572.3,577.6L572.4,577.3L572.5,577.0L572.6,576.7L572.6,576.4L572.7,576.0L572.8,575.7L572.9,575.4L572.9,575.1L573.0,574.8L573.1,574.5L573.2,574.2L573.3,573.8L573.3,573.5L573.4,573.2L573.5,572.9L573.6,572.6L573.7,572.3L573.7,572.0L573.8,571.7L573.9,571.3L574.0,571.0L574.1,570.7L574.2,570.4L574.3,570.1L574.3,569.8L574.4,569.5L574.5,569.2L574.6,568.8L574.7,568.5L574.8,568.2L574.9,567.9L575.0,567.6L575.0,567.3L575.1,567.0L575.2,566.7L575.3,566.3L575.4,566.0L575.5,565.7L575.6,565.4L575.7,565.1L575.8,564.8L575.9,564.5L576.0,564.2L576.1,563.8L576.1,563.5L576.2,563.2L576.3,562.9L576.4,562.6L576.5,562.3L576.6,562.0L576.7,561.7L576.8,561.3L576.9,561.0L577.0,560.7L577.1,560.4" fill="none" stroke="#008000" stroke-width="3.3" stroke-linejoin="round" stroke-linecap="round"/><path d="M577.2,685.5L577.3,685.2L577.4,684.9L577.4,684.6L577.5,684.2L577.6,683.9L577.7,683.6L577.8,683.3L577.9,683.0L578.0,682.7L578.1,682.4L578.1,682.1L578.2,681.7L578.3,681.4L578.4,681.1L578.5,680.8L578.6,680.5L578.7,680.2L578.7,679.9L578.8,679.6L578.9,679.2L579.0,678.9L579.1,678.6L579.2,678.3L579.2,678.0L579.3,677.7L579.4,677.4L579.5,677.1L579.5,676.7L579.6,676.4L579.7,676.1L579.8,675.8L579.9,675.5L579.9,675.2L580.0,674.9L580.1,674.6L580.2,674.2L580.2,673.9L580.3,673.6L580.4,673.3L580.5,673.0L580.5,672.7L580.6,672.4L580.7,672.1L580.7,671.7L580.8,671.4L580.9,671.1L581.0,670.8L581.0,670.5L581.1,670.2L581.2,669.9L581.2,669.5L581.3,669.2L581.4,668.9L581.4,668.6L581.5,668.3L581.6,668.0L581.6,667.7L581.7,667.4L581.8,667.0L581.8,666.7L581.9,666.4L582.0,666.1L582.0,665.8L582.1,665.5L582.1,665.2L582.2,664.9L582.3,664.5L582.3,664.2L582.4,663.9L582.4,663.6L582.5,663.3L582.6,663.0L582.6,662.7L582.7,662.4L582.7,662.0L582.8,661.7L582.8,661.4L582.9,661.1L582.9,660.8L583.0,660.5L583.1,660.2L583.1,659.9L583.2,659.5L583.2,659.2L583.3,658.9L583.3,658.6L583.4,658.3L583.4,658.0L583.5,657.7L583.5,657.4L583.6,657.0L583.6,656.7L583.7,656.4L583.7,656.1L583.8,655.8L583.8,655.5L583.9,655.2L583.9,654.9L583.9,654.5L584.0,654.2L584.0,653.9L584.1,653.6L584.1,653.3L584.2,653.0L584.2,652.7L584.2,652.3L584.3,652.0L584.3,651.7L584.4,651.4L584.4,651.1L584.4,650.8L584.5,650.5L584.5,650.2L584.6,649.8L584.6,649.5L584.6,649.2L584.7,648.9L584.7,648.6L584.7,648.3L584.8,648.0L584.8,647.7L584.8,647.3L584.9,647.0L584.9,646.7L584.9,646.4L585.0,646.1L585.0,645.8L585.0,645.5L585.1,645.2L585.1,644.8L585.1,644.5L585.2,644.2L585.2,643.9L585.2,643.6L585.2,643.3L585.3,643.0L585.3,642.7L585.3,642.3L585.4,642.0L585.4,641.7L585.4,641.4L585.4,641.1L585.5,640.8L585.5,640.5L585.5,640.2L585.5,639.8L585.5,639.5L585.6,639.2L585.6,638.9L585.6,638.6L585.6,638.3L585.6,638.0L585.7,637.6L585.7,637.3L585.7,637.0L585.7,636.7L585.7,636.4L585.7,636.1L585.8,635.8L585.8,635.5L585.8,635.1L585.8,634.8L585.8,634.5L585.8,634.2L585.8,633.9L585.9,633.6L585.9,633.3L585.9,633.0L585.9,632.6L585.9,632.3L585.9,632.0L585.9,631.7L585.9,631.4L585.9,631.1L586.0,630.8L586.0,630.5L586.0,630.1L586.0,629.8L586.0,629.5L586.0,629.2L586.0,628.9L586.0,628.6L586.0,628.3L586.0,628.0L586.0,627.6L586.0,627.3L586.0,627.0L586.0,626.7L586.0,626.4L586.0,626.1L586.0,625.8L586.0,625.5L586.0,625.1L586.0,624.8L586.0,624.5L586.0,624.2L586.0,623.9L586.0,623.6L586.0,623.3L586.0,623.0L586.0,622.6L586.0,622.3L586.0,622.0L586.0,621.7L586.0,621.4L586.0,621.1L585.9,620.8L585.9,620.4L585.9,620.1L585.9,619.8L585.9,619.5L585.9,619.2L585.9,618.9L585.9,618.6L585.9,618.3L585.9,617.9L585.8,617.6L585.8,617.3L585.8,617.0L585.8,616.7L585.8,616.4L585.8,616.1L585.8,615.8L585.7,615.4L585.7,615.1L585.7,614.8L585.7,614.5L585.7,614.2L585.7,613.9L585.6,613.6L585.6,613.3L585.6,612.9L585.6,612.6L585.6,612.3L585.5,612.0L585.5,611.7L585.5,611.4L585.5,611.1L585.4,610.8L585.4,610.4L585.4,610.1L585.4,609.8L585.3,609.5L585.3,609.2L585.3,608.9L585.3,608.6L585.2,608.3L585.2,607.9L585.2,607.6L585.1,607.3L585.1,607.0L585.1,606.7L585.1,606.4L585.0,606.1L585.0,605.7L585.0,605.4L584.9,605.1L584.9,604.8L584.9,604.5L584.8,604.2L584.8,603.9L584.8,603.6L584.7,603.2L584.7,602.9L584.7,602.6L584.6,602.3L584.6,602.0L584.5,601.7L584.5,601.4L584.5,601.1L584.4,600.7L584.4,600.4L584.3,600.1L584.3,599.8L584.3,599.5L584.2,599.2L584.2,598.9L584.1,598.6L584.1,598.2L584.1,597.9L584.0,597.6L584.0,597.3L583.9,597.0L583.9,596.7L583.8,596.4L583.8,596.1L583.7,595.7L583.7,595.4L583.6,595.1L583.6,594.8L583.5,594.5L583.5,594.2L583.4,593.9L583.4,593.6L583.3,593.2L583.3,592.9L583.2,592.6L583.2,592.3L583.1,592.0L583.1,591.7L583.0,591.4L583.0,591.0L582.9,590.7L582.9,590.4L582.8,590.1L582.8,589.8L582.7,589.5L582.6,589.2L582.6,588.9L582.5,588.5L582.5,588.2L582.4,587.9L582.3,587.6L582.3,587.3L582.2,587.0L582.2,586.7L582.1,586.4L582.0,586.0L582.0,585.7L581.9,585.4L581.9,585.1L581.8,584.8L581.7,584.5L581.7,584.2L581.6,583.9L581.5,583.5L581.5,583.2L581.4,582.9L581.3,582.6L581.3,582.3L581.2,582.0L581.1,581.7L581.1,581.4L581.0,581.0L580.9,580.7L580.9,580.4L580.8,580.1L580.7,579.8L580.6,579.5L580.6,579.2L580.5,578.9L580.4,578.5L580.3,578.2L580.3,577.9L580.2,577.6L580.1,577.3L580.1,577.0L580.0,576.7L579.9,576.4L579.8,576.0L579.7,575.7L579.7,575.4L579.6,575.1L579.5,574.8L579.4,574.5L579.4,574.2L579.3,573.8L579.2,573.5L579.1,573.2L579.0,572.9L578.9,572.6L578.9,572.3L578.8,572.0L578.7,571.7L578.6,571.3L578.5,571.0L578.4,570.7L578.4,570.4L578.3,570.1L578.2,569.8L578.1,569.5L578.0,569.2L577.9,568.8L577.8,568.5L577.8,568.2L577.7,567.9L577.6,567.6L577.5,567.3L577.4,567.0L577.3,566.7L577.2,566.3L577.1,566.0L577.0,565.7L576.9,565.4L576.9,565.1L576.8,564.8L576.7,564.5L576.6,564.2L576.5,563.8L576.4,563.5L576.3,563.2L576.2,562.9L576.1,562.6L576.0,562.3L575.9,562.0L575.8,561.7L575.7,561.3L575.6,561.0L575.5,560.7L575.4,560.4" fill="none" stroke="#008000" stroke-width="3.3" stroke-linejoin="round" stroke-linecap="round"/><path d="M573.2,685.5L573.1,684.8L573.0,684.1L572.8,683.4L572.7,682.7L572.6,681.9L572.4,681.2L572.3,680.5L572.1,679.8L572.0,679.1L571.8,678.4L571.6,677.7L571.5,677.0L571.3,676.3L571.1,675.6L571.0,674.8L570.8,674.1L570.6,673.4L570.4,672.7L570.2,672.0L570.0,671.3L569.8,670.6L569.6,669.9L569.4,669.2L569.2,668.4L569.0,667.7L568.7,667.0L568.5,666.3L568.3,665.6L568.0,664.9L567.8,664.2L567.6,663.5L567.3,662.8L567.1,662.0L566.8,661.3L566.6,660.6L566.3,659.9L566.1,659.2L565.8,658.5L565.5,657.8L565.3,657.1L565.0,656.4L564.7,655.7L564.4,654.9L564.1,654.2L563.9,653.5L563.6,652.8L563.3,652.1L563.0,651.4L562.7,650.7L562.4,650.0L562.1,649.3L561.8,648.5L561.4,647.8L561.1,647.1L560.8,646.4L560.5,645.7L560.2,645.0L559.8,644.3L559.5,643.6L559.2,642.9L558.8,642.2L558.5,641.4L558.2,640.7L557.8,640.0L557.5,639.3L557.1,638.6L556.8,637.9L556.4,637.2L556.1,636.5L555.7,635.8L555.3,635.0L555.0,634.3L554.6,633.6L554.3,632.9L553.9,632.2L553.5,631.5L553.1,630.8L552.8,630.1L552.4,629.4L552.0,628.6L551.6,627.9L551.2,627.2L550.9,626.5L550.5,625.8L550.1,625.1L549.7,624.4L549.3,623.7L548.9,623.0L548.5,622.3L548.1,621.5L547.7,620.8L547.3,620.1L546.9,619.4L546.5,618.7L546.1,618.0L545.7,617.3L545.3,616.6L544.9,615.9L544.5,615.1L544.0,614.4L543.6,613.7L543.2,613.0L542.8,612.3L542.4,611.6L542.0,610.9L541.6,610.2L541.1,609.5L540.7,608.8L540.3,608.0L539.9,607.3L539.4,606.6L539.0,605.9L538.6,605.2L538.2,604.5L537.8,603.8L537.3,603.1L536.9,602.4L536.5,601.6L536.1,600.9L535.6,600.2L535.2,599.5L534.8,598.8L534.3,598.1L533.9,597.4L533.5,596.7L533.1,596.0L532.6,595.2L532.2,594.5L531.8,593.8L531.4,593.1L530.9,592.4L530.5,591.7L530.1,591.0L529.7,590.3L529.2,589.6L528.8,588.9L528.4,588.1L528.0,587.4L527.5,586.7L527.1,586.0L526.7,585.3L526.3,584.6L525.8,583.9L525.4,583.2L525.0,582.5L524.6,581.7L524.2,581.0L523.7,580.3L523.3,579.6L522.9,578.9L522.5,578.2L522.1,577.5L521.7,576.8L521.3,576.1L520.9,575.4L520.5,574.6L520.0,573.9L519.6,573.2L519.2,572.5L518.8,571.8L518.4,571.1L518.0,570.4L517.6,569.7L517.2,569.0L516.8,568.2L516.5,567.5L516.1,566.8L515.7,566.1L515.3,565.4L514.9,564.7L514.5,564.0L514.1,563.3L513.8,562.6L513.4,561.8L513.0,561.1L512.6,560.4L512.3,559.7L511.9,559.0L511.5,558.3L511.2,557.6L510.8,556.9L510.4,556.2L510.1,555.5L509.7,554.7L509.4,554.0L509.0,553.3L508.7,552.6L508.3,551.9L508.0,551.2L507.6,550.5L507.3,549.8L507.0,549.1L506.6,548.3L506.3,547.6L506.0,546.9L505.7,546.2L505.3,545.5L505.0,544.8L504.7,544.1L504.4,543.4L504.1,542.7L503.8,542.0L503.5,541.2L503.2,540.5L502.9,539.8L502.6,539.1L502.3,538.4L502.0,537.7L501.7,537.0L501.4,536.3L501.2,535.6L500.9,534.8L500.6,534.1L500.4,533.4L500.1,532.7L499.8,532.0L499.6,531.3L499.3,530.6L499.1,529.9L498.8,529.2L498.6,528.4L498.3,527.7L498.1,527.0L497.9,526.3L497.7,525.6L497.4,524.9L497.2,524.2L497.0,523.5L496.8,522.8L496.6,522.1L496.4,521.3L496.2,520.6L496.0,519.9L495.8,519.2L495.6,518.5L495.4,517.8L495.2,517.1L495.0,516.4L494.9,515.7L494.7,514.9L494.5,514.2L494.4,513.5L494.2,512.8L494.1,512.1L493.9,511.4L493.8,510.7L493.6,510.0L493.5,509.3L493.3,508.6L493.2,507.8L493.1,507.1L493.0,506.4L492.9,505.7L492.7,505.0L492.6,504.3L492.5,503.6L492.4,502.9L492.3,502.2L492.2,501.4L492.2,500.7L492.1,500.0L492.0,499.3L491.9,498.6L491.8,497.9L491.8,497.2L491.7,496.5L491.7,495.8L491.6,495.0L491.6,494.3L491.5,493.6L491.5,492.9L491.4,492.2L491.4,491.5L491.4,490.8L491.4,490.1L491.4,489.4L491.3,488.7L491.3,487.9L491.3,487.2L491.3,486.5L491.3,485.8L491.3,485.1L491.3,484.4L491.4,483.7L491.4,483.0L491.4,482.3L491.4,481.5L491.5,480.8L491.5,480.1L491.6,479.4L491.6,478.7L491.7,478.0L491.7,477.3L491.8,476.6L491.8,475.9L491.9,475.2L492.0,474.4L492.1,473.7L492.1,473.0L492.2,472.3L492.3,471.6L492.4,470.9L492.5,470.2L492.6,469.5L492.7,468.8L492.8,468.0L493.0,467.3L493.1,466.6L493.2,465.9L493.3,465.2L493.5,464.5L493.6,463.8L493.7,463.1L493.9,462.4L494.0,461.6L494.2,460.9L494.3,460.2L494.5,459.5L494.7,458.8L494.8,458.1L495.0,457.4L495.2,456.7L495.4,456.0L495.6,455.3L495.8,454.5L495.9,453.8L496.1,453.1L496.3,452.4L496.5,451.7L496.8,451.0L497.0,450.3L497.2,449.6L497.4,448.9L497.6,448.1L497.9,447.4L498.1,446.7L498.3,446.0L498.6,445.3L498.8,444.6L499.1,443.9L499.3,443.2L499.6,442.5L499.8,441.8L500.1,441.0L500.3,440.3L500.6,439.6L500.9,438.9L501.1,438.2L501.4,437.5L501.7,436.8L502.0,436.1L502.3,435.4L502.6,434.6L502.9,433.9L503.1,433.2L503.4,432.5L503.8,431.8L504.1,431.1L504.4,430.4L504.7,429.7L505.0,429.0L505.3,428.2L505.6,427.5L506.0,426.8L506.3,426.1L506.6,425.4L506.9,424.7L507.3,424.0L507.6,423.3L508.0,422.6L508.3,421.9L508.6,421.1L509.0,420.4L509.3,419.7L509.7,419.0L510.0,418.3L510.4,417.6L510.8,416.9L511.1,416.2L511.5,415.5L511.9,414.7L512.2,414.0L512.6,413.3L513.0,412.6L513.3,411.9L513.7,411.2L514.1,410.5L514.5,409.8L514.9,409.1L515.2,408.4L515.6,407.6L516.0,406.9L516.4,406.2L516.8,405.5L517.2,404.8L517.6,404.1L518.0,403.4L518.4,402.7L518.8,402.0L519.2,401.2" fill="none" stroke="#008000" stroke-width="3.3" stroke-linejoin="round" stroke-linecap="round"/><path d="M518.9,399.1L519.0,400.5L519.1,401.9L519.1,403.2L519.2,404.5L519.3,405.9L519.4,407.2L519.5,408.4L519.6,409.7L519.7,411.0L519.7,412.3L519.8,413.5L519.9,414.7L520.0,416.0L520.1,417.2L520.2,418.4L520.2,419.6L520.3,420.7L520.4,421.9L520.5,423.1L520.6,424.2L520.7,425.3L520.7,426.5L520.8,427.6L520.9,428.7L521.0,429.8L521.1,430.9L521.2,432.0L521.3,433.1L521.3,434.1L521.4,435.2L521.5,436.2L521.6,437.3L521.7,438.3L521.8,439.3L521.8,440.3L521.9,441.3L522.0,442.3L522.1,443.3L522.2,444.3L522.3,445.3L522.3,446.3L522.4,447.2L522.5,448.2L522.6,449.1L522.7,450.1L522.8,451.0L522.9,451.9L522.9,452.8L523.0,453.8L523.1,454.7L523.2,455.6L523.3,456.5L523.4,457.4L523.4,458.2L523.5,459.1L523.6,460.0L523.7,460.8L523.8,461.7L523.9,462.6L523.9,463.4L524.0,464.2L524.1,465.1L524.2,465.9L524.3,466.7L524.4,467.5L524.5,468.4L524.5,469.2L524.6,470.0L524.7,470.8L524.8,471.6L524.9,472.4L525.0,473.1L525.0,473.9L525.1,474.7L525.2,475.5L525.3,476.2L525.4,477.0L525.5,477.7L525.5,478.5L525.6,479.2L525.7,480.0L525.8,480.7L525.9,481.4L526.0,482.2L526.1,482.9L526.1,483.6L526.2,484.3L526.3,485.0L526.4,485.7L526.5,486.5L526.6,487.2L526.6,487.8L526.7,488.5L526.8,489.2L526.9,489.9L527.0,490.6L527.1,491.3L527.2,491.9L527.2,492.6L527.3,493.3L527.4,493.9L527.5,494.6L527.6,495.3L527.7,495.9L527.7,496.6L527.8,497.2L527.9,497.9L528.0,498.5L528.1,499.1L528.2,499.8L528.2,500.4L528.3,501.0L528.4,501.6L528.5,502.3L528.6,502.9L528.7,503.5L528.8,504.1L528.8,504.7L528.9,505.3L529.0,505.9L529.1,506.5L529.2,507.1L529.3,507.7L529.3,508.3L529.4,508.9L529.5,509.5L529.6,510.1L529.7,510.7L529.8,511.2L529.8,511.8L529.9,512.4L530.0,513.0L530.1,513.5L530.2,514.1L530.3,514.7L530.4,515.2L530.4,515.8L530.5,516.3L530.6,516.9L530.7,517.4L530.8,518.0L530.9,518.5L530.9,519.1L531.0,519.6L531.1,520.2L531.2,520.7L531.3,521.3L531.4,521.8L531.4,522.3L531.5,522.9L531.6,523.4L531.7,523.9L531.8,524.4L531.9,525.0L532.0,525.5L532.0,526.0L532.1,526.5L532.2,527.0L532.3,527.5L532.4,528.1L532.5,528.6L532.5,529.1L532.6,529.6L532.7,530.1L532.8,530.6L532.9,531.1L533.0,531.6L533.0,532.1L533.1,532.6L533.2,533.1L533.3,533.6L533.4,534.1L533.5,534.6L533.6,535.0L533.6,535.5L533.7,536.0L533.8,536.5L533.9,537.0L534.0,537.5L534.1,537.9L534.1,538.4L534.2,538.9L534.3,539.4L534.4,539.8L534.5,540.3L534.6,540.8L534.6,541.2L534.7,541.7L534.8,542.2L534.9,542.6L535.0,543.1L535.1,543.6L535.2,544.0L535.2,544.5L535.3,544.9L535.4,545.4L535.5,545.9L535.6,546.3L535.7,546.8L535.7,547.2L535.8,547.7L535.9,548.1L536.0,548.6L536.1,549.0L536.2,549.5L536.2,549.9L536.3,550.4L536.4,550.8L536.5,551.2L536.6,551.7L536.7,552.1L536.8,552.6L536.8,553.0L536.9,553.4L537.0,553.9L537.1,554.3L537.2,554.7L537.3,555.2L537.3,555.6L537.4,556.0L537.5,556.5L537.6,556.9L537.7,557.3L537.8,557.7L537.8,558.2L537.9,558.6L538.0,559.0L538.1,559.4L538.2,559.9L538.3,560.3L538.4,560.7L538.4,561.1L538.5,561.5L538.6,562.0L538.7,562.4L538.8,562.8L538.9,563.2L538.9,563.6L539.0,564.0L539.1,564.4L539.2,564.9L539.3,565.3L539.4,565.7L539.5,566.1L539.5,566.5L539.6,566.9L539.7,567.3L539.8,567.7L539.9,568.1L540.0,568.5L540.0,568.9L540.1,569.3L540.2,569.7L540.3,570.1L540.4,570.6L540.5,571.0L540.5,571.4L540.6,571.8L540.7,572.2L540.8,572.6L540.9,573.0L541.0,573.4L541.1,573.8L541.1,574.2L541.2,574.5L541.3,574.9L541.4,575.3L541.5,575.7L541.6,576.1L541.6,576.5L541.7,576.9L541.8,577.3L541.9,577.7L542.0,578.1L542.1,578.5L542.1,578.9L542.2,579.3L542.3,579.7L542.4,580.1L542.5,580.4L542.6,580.8L542.7,581.2L542.7,581.6L542.8,582.0L542.9,582.4L543.0,582.8L543.1,583.2L543.2,583.6L543.2,583.9L543.3,584.3L543.4,584.7L543.5,585.1L543.6,585.5L543.7,585.9L543.7,586.2L543.8,586.6L543.9,587.0L544.0,587.4L544.1,587.8L544.2,588.2L544.3,588.6L544.3,588.9L544.4,589.3L544.5,589.7L544.6,590.1L544.7,590.5L544.8,590.8L544.8,591.2L544.9,591.6L545.0,592.0L545.1,592.4L545.2,592.7L545.3,593.1L545.3,593.5L545.4,593.9L545.5,594.3L545.6,594.6L545.7,595.0L545.8,595.4L545.9,595.8L545.9,596.2L546.0,596.5L546.1,596.9L546.2,597.3L546.3,597.7L546.4,598.1L546.4,598.4L546.5,598.8L546.6,599.2L546.7,599.6L546.8,600.0L546.9,600.3L546.9,600.7L547.0,601.1L547.1,601.5L547.2,601.8L547.3,602.2L547.4,602.6L547.5,603.0L547.5,603.4L547.6,603.7L547.7,604.1L547.8,604.5L547.9,604.9L548.0,605.3L548.0,605.6L548.1,606.0L548.2,606.4L548.3,606.8L548.4,607.1L548.5,607.5L548.5,607.9L548.6,608.3L548.7,608.7L548.8,609.0L548.9,609.4L549.0,609.8L549.1,610.2L549.1,610.6L549.2,610.9L549.3,611.3L549.4,611.7L549.5,612.1L549.6,612.5L549.6,612.8L549.7,613.2L549.8,613.6L549.9,614.0L550.0,614.4L550.1,614.8L550.1,615.1L550.2,615.5L550.3,615.9L550.4,616.3L550.5,616.7L550.6,617.1L550.7,617.4L550.7,617.8L550.8,618.2L550.9,618.6L551.0,619.0L551.1,619.4L551.2,619.8L551.2,620.1L551.3,620.5L551.4,620.9L551.5,621.3L551.6,621.7L551.7,622.1L551.8,622.5L551.8,622.8L551.9,623.2L552.0,623.6L552.1,624.0L552.2,624.4L552.3,624.8L552.3,625.2L552.4,625.6L552.5,626.0L552.6,626.4" fill="none" stroke="#008000" stroke-width="3.3" stroke-linejoin="round" stroke-linecap="round"/><circle cx="815.8" cy="199.0" r="34.1" fill="#ffff00" stroke="#ffff00" stroke-width="4"/><path d="M815.8,268.5V129.5" stroke="#ffff00" stroke-width="1.3"/><path d="M732.2,199.0H899.3" stroke="#ffff00" stroke-width="2"/><path d="M746.1,268.5L885.4,129.5M746.1,129.5L885.4,268.5" stroke="#ffff00" stroke-width="1.3"/><path d="M441.0,248.9L440.9,248.4L440.7,247.8L440.6,247.2L440.4,246.6L440.3,246.1L440.2,245.5L440.1,244.9L440.0,244.3L440.0,243.7L439.9,243.1L439.9,242.5L439.8,242.0L439.8,241.4L439.8,240.8L439.8,240.2L439.8,239.6L439.9,239.0L439.9,238.4L439.9,237.8L440.0,237.3L440.1,236.7L440.2,236.1L440.3,235.5L440.4,234.9L440.5,234.3L440.7,233.8L440.8,233.2L441.0,232.6L441.2,232.1L441.4,231.5L441.6,231.0L441.8,230.4L442.0,229.9L442.2,229.3L442.5,228.8L442.7,228.3L443.0,227.7L443.3,227.2L443.6,226.7L443.9,226.2L444.2,225.7L444.5,225.2L444.9,224.7L445.2,224.2L445.6,223.8L445.9,223.3L446.3,222.8L446.7,222.4L447.1,222.0L447.5,221.5L447.9,221.1L448.3,220.7L448.7,220.3L449.2,219.9L449.6,219.5L450.1,219.1L450.5,218.8L451.0,218.4L451.5,218.1L452.0,217.7L452.5,217.4L453.0,217.1L453.5,216.8L454.0,216.5L454.5,216.2L455.0,215.9L455.6,215.7L456.1,215.4L456.6,215.2L457.2,214.9L457.7,214.7L458.3,214.5L458.8,214.3L459.4,214.1L460.0,214.0L460.5,213.8L461.1,213.7L461.7,213.5L462.3,213.4L462.8,213.3L463.4,213.2L464.0,213.1L464.6,213.1L465.2,213.0L465.8,213.0L466.4,212.9L467.0,212.9L467.6,212.9L468.1,212.9L468.7,212.9L469.3,213.0L469.9,213.0L470.5,213.0L471.1,213.1L471.7,213.2L472.3,213.3L472.8,213.4L473.4,213.5L474.0,213.6L474.6,213.8L475.1,213.9L475.7,214.1L476.3,214.3L476.8,214.5L477.4,214.7L477.9,214.9L478.5,215.1L479.0,215.3L479.6,215.6L480.1,215.8L480.6,216.1L481.1,216.4L481.7,216.7L482.2,217.0L482.7,217.3L483.2,217.6L483.6,217.9L484.1,218.3L484.6,218.6L485.1,219.0M485.1,219.0L485.3,218.6L485.5,218.2L485.8,217.8L486.0,217.4L486.3,217.0L486.5,216.6L486.8,216.2L487.0,215.9L487.3,215.5L487.6,215.1L487.8,214.7L488.1,214.3L488.4,214.0L488.7,213.6L489.0,213.2L489.3,212.9L489.5,212.5L489.8,212.2L490.1,211.8L490.5,211.5L490.8,211.1L491.1,210.8L491.4,210.5L491.7,210.1L492.0,209.8L492.4,209.5L492.7,209.1L493.0,208.8L493.4,208.5L493.7,208.2L494.1,207.9L494.4,207.6L494.8,207.3L495.1,207.0L495.5,206.7L495.8,206.4L496.2,206.1L496.6,205.8L496.9,205.5L497.3,205.3L497.7,205.0L498.1,204.7L498.4,204.4L498.8,204.2L499.2,203.9L499.6,203.7L500.0,203.4L500.4,203.2L500.8,202.9L501.2,202.7L501.6,202.5L502.0,202.3L502.4,202.0L502.8,201.8L503.2,201.6L503.6,201.4L504.1,201.2L504.5,201.0L504.9,200.8L505.3,200.6L505.7,200.4L506.2,200.2L506.6,200.0L507.0,199.9L507.5,199.7L507.9,199.5L508.3,199.4L508.8,199.2L509.2,199.1L509.7,198.9L510.1,198.8L510.5,198.6L511.0,198.5L511.4,198.4L511.9,198.3L512.3,198.1L512.8,198.0L513.2,197.9L513.7,197.8L514.1,197.7L514.6,197.6L515.0,197.5L515.5,197.4L516.0,197.4L516.4,197.3L516.9,197.2L517.3,197.2L517.8,197.1L518.3,197.0L518.7,197.0L519.2,196.9L519.6,196.9L520.1,196.9L520.6,196.8L521.0,196.8L521.5,196.8L522.0,196.8L522.4,196.8L522.9,196.7L523.4,196.7L523.8,196.7L524.3,196.8L524.7,196.8L525.2,196.8L525.7,196.8L526.1,196.8L526.6,196.9L527.1,196.9L527.5,196.9L528.0,197.0L528.4,197.0L528.9,197.1L529.4,197.2L529.8,197.2L530.3,197.3L530.7,197.4L531.2,197.4L531.7,197.5L532.1,197.6L532.6,197.7L533.0,197.8L533.5,197.9L533.9,198.0L534.4,198.1L534.8,198.3L535.3,198.4L535.7,198.5L536.2,198.6L536.6,198.8L537.0,198.9L537.5,199.1L537.9,199.2L538.4,199.4L538.8,199.5L539.2,199.7L539.7,199.9L540.1,200.0L540.5,200.2L541.0,200.4L541.4,200.6L541.8,200.8L542.2,201.0L542.6,201.2L543.1,201.4L543.5,201.6L543.9,201.8L544.3,202.0L544.7,202.3L545.1,202.5L545.5,202.7L545.9,202.9L546.3,203.2L546.7,203.4L547.1,203.7L547.5,203.9L547.9,204.2L548.3,204.4L548.6,204.7L549.0,205.0L549.4,205.3L549.8,205.5L550.1,205.8L550.5,206.1L550.9,206.4L551.2,206.7L551.6,207.0L551.9,207.3L552.3,207.6L552.6,207.9L553.0,208.2L553.3,208.5L553.7,208.8L554.0,209.1L554.3,209.5L554.7,209.8L555.0,210.1L555.3,210.5L555.6,210.8L555.9,211.1L556.2,211.5L556.6,211.8L556.9,212.2L557.2,212.5L557.4,212.9L557.7,213.2L558.0,213.6L558.3,214.0L558.6,214.3L558.9,214.7L559.1,215.1L559.4,215.5L559.7,215.9L559.9,216.2L560.2,216.6L560.4,217.0L560.7,217.4L560.9,217.8L561.2,218.2L561.4,218.6L561.6,219.0M561.6,219.0L562.1,218.6L562.6,218.3L563.0,218.0L563.5,217.6L564.0,217.3L564.5,217.0L565.0,216.7L565.5,216.4L566.0,216.1L566.5,215.9L567.0,215.6L567.6,215.4L568.1,215.1L568.6,214.9L569.2,214.7L569.7,214.5L570.2,214.3L570.8,214.1L571.4,214.0L571.9,213.8L572.5,213.7L573.0,213.6L573.6,213.4L574.2,213.3L574.7,213.2L575.3,213.2L575.9,213.1L576.5,213.0L577.0,213.0L577.6,212.9L578.2,212.9L578.8,212.9L579.4,212.9L579.9,212.9L580.5,212.9L581.1,213.0L581.7,213.0L582.3,213.1L582.8,213.2L583.4,213.2L584.0,213.3L584.5,213.4L585.1,213.6L585.7,213.7L586.2,213.8L586.8,214.0L587.3,214.2L587.9,214.3L588.4,214.5L589.0,214.7L589.5,214.9L590.1,215.2L590.6,215.4L591.1,215.6L591.6,215.9L592.1,216.2L592.7,216.4L593.2,216.7L593.7,217.0L594.1,217.3L594.6,217.7L595.1,218.0L595.6,218.3L596.0,218.7L596.5,219.0L596.9,219.4L597.4,219.8L597.8,220.2L598.2,220.5L598.7,221.0L599.1,221.4L599.5,221.8L599.8,222.2L600.2,222.6L600.6,223.1L601.0,223.5L601.3,224.0L601.7,224.5L602.0,224.9L602.3,225.4L602.6,225.9L602.9,226.4L603.2,226.9L603.5,227.4L603.8,227.9L604.0,228.4L604.3,228.9L604.5,229.5L604.8,230.0L605.0,230.5L605.2,231.1L605.4,231.6L605.6,232.2L605.7,232.7L605.9,233.3L606.0,233.8L606.2,234.4L606.3,235.0L606.4,235.5L606.5,236.1L606.6,236.7L606.7,237.3L606.8,237.8L606.8,238.4L606.8,239.0L606.9,239.6L606.9,240.1L606.9,240.7L606.9,241.3L606.9,241.9L606.8,242.4L606.8,243.0L606.7,243.6L606.7,244.2L606.6,244.7L606.5,245.3L606.4,245.9L606.3,246.5L606.2,247.0L606.0,247.6M606.9,240.7L606.7,241.4L606.4,242.1L606.2,242.8L605.9,243.5L605.7,244.1L605.4,244.8L605.1,245.5L604.9,246.2L604.6,246.9L604.3,247.5L604.0,248.2L603.7,248.9L603.4,249.5L603.1,250.2L602.8,250.9L602.5,251.5L602.1,252.2L601.8,252.8L601.5,253.5L601.1,254.1L600.8,254.8L600.4,255.4L600.1,256.1L599.7,256.7L599.3,257.3L599.0,258.0L598.6,258.6L598.2,259.2L597.8,259.8L597.4,260.5L597.0,261.1L596.6,261.7L596.2,262.3L595.8,262.9L595.4,263.5L594.9,264.1L594.5,264.7L594.1,265.3L593.6,265.9L593.2,266.4L592.8,267.0L592.3,267.6L591.8,268.2L591.4,268.7L590.9,269.3L590.4,269.9L590.0,270.4L589.5,271.0L589.0,271.5L588.5,272.1L588.0,272.6L587.5,273.1L587.0,273.7L586.5,274.2L586.0,274.7L585.5,275.2L584.9,275.7L584.4,276.3L583.9,276.8L583.3,277.3L582.8,277.8L582.3,278.2L581.7,278.7L581.2,279.2L580.6,279.7L580.0,280.2L579.5,280.6L578.9,281.1L578.3,281.6L577.8,282.0L577.2,282.5L576.6,282.9L576.0,283.4L575.4,283.8L574.8,284.2L574.2,284.6L573.6,285.1L573.0,285.5L572.4,285.9L571.8,286.3L571.2,286.7L570.6,287.1L570.0,287.5L569.4,287.9L568.7,288.2L568.1,288.6L567.5,289.0L566.8,289.4L566.2,289.7L565.5,290.1L564.9,290.4L564.3,290.8L563.6,291.1L562.9,291.4L562.3,291.8L561.6,292.1L561.0,292.4L560.3,292.7L559.6,293.0L559.0,293.3L558.3,293.6L557.6,293.9L556.9,294.2L556.3,294.4L555.6,294.7L554.9,295.0L554.2,295.2L553.5,295.5L552.8,295.7L552.1,296.0L551.5,296.2L550.8,296.4L550.1,296.7L549.4,296.9L548.7,297.1L548.0,297.3L547.2,297.5L546.5,297.7L545.8,297.9L545.1,298.1L544.4,298.3L543.7,298.4L543.0,298.6L542.3,298.8L541.6,298.9L540.8,299.1L540.1,299.2L539.4,299.3L538.7,299.5L537.9,299.6L537.2,299.7L536.5,299.8L535.8,299.9L535.0,300.0L534.3,300.1L533.6,300.2L532.9,300.3L532.1,300.4L531.4,300.4L530.7,300.5L529.9,300.6L529.2,300.6L528.5,300.7L527.7,300.7L527.0,300.7L526.3,300.8L525.5,300.8L524.8,300.8L524.1,300.8L523.4,300.8L522.6,300.8L521.9,300.8L521.2,300.8L520.4,300.8L519.7,300.7L519.0,300.7L518.2,300.7L517.5,300.6L516.8,300.6L516.0,300.5L515.3,300.4L514.6,300.4L513.8,300.3L513.1,300.2L512.4,300.1L511.7,300.0L510.9,299.9L510.2,299.8L509.5,299.7L508.8,299.6L508.0,299.5L507.3,299.3L506.6,299.2L505.9,299.1L505.1,298.9L504.4,298.8L503.7,298.6L503.0,298.4L502.3,298.3L501.6,298.1L500.9,297.9L500.2,297.7L499.5,297.5L498.7,297.3L498.0,297.1L497.3,296.9L496.6,296.7L495.9,296.4L495.2,296.2L494.6,296.0L493.9,295.7L493.2,295.5L492.5,295.2L491.8,295.0L491.1,294.7L490.4,294.4L489.8,294.2L489.1,293.9L488.4,293.6L487.7,293.3L487.1,293.0L486.4,292.7L485.7,292.4L485.1,292.1L484.4,291.8L483.8,291.4L483.1,291.1L482.4,290.8L481.8,290.4L481.2,290.1L480.5,289.7L479.9,289.4L479.2,289.0L478.6,288.6L478.0,288.2L477.3,287.9L476.7,287.5L476.1,287.1L475.5,286.7L474.9,286.3L474.3,285.9L473.7,285.5L473.1,285.1L472.5,284.6L471.9,284.2L471.3,283.8L470.7,283.4L470.1,282.9L469.5,282.5L468.9,282.0L468.4,281.6L467.8,281.1L467.2,280.6L466.7,280.2L466.1,279.7L465.5,279.2L465.0,278.7L464.4,278.2L463.9,277.8L463.4,277.3L462.8,276.8L462.3,276.3L461.8,275.7L461.2,275.2L460.7,274.7L460.2,274.2L459.7,273.7L459.2,273.1L458.7,272.6L458.2,272.1L457.7,271.5L457.2,271.0L456.7,270.4L456.3,269.9L455.8,269.3L455.3,268.7L454.9,268.2L454.4,267.6L453.9,267.0L453.5,266.4L453.1,265.9L452.6,265.3L452.2,264.7L451.8,264.1L451.3,263.5L450.9,262.9L450.5,262.3L450.1,261.7L449.7,261.1L449.3,260.5L448.9,259.8L448.5,259.2L448.1,258.6L447.7,258.0L447.4,257.3L447.0,256.7L446.6,256.1L446.3,255.4L445.9,254.8L445.6,254.1L445.2,253.5L444.9,252.8L444.6,252.2L444.2,251.5L443.9,250.9L443.6,250.2L443.3,249.5L443.0,248.9L442.7,248.2L442.4,247.5L442.1,246.9L441.8,246.2L441.6,245.5L441.3,244.8L441.0,244.1L440.8,243.5L440.5,242.8L440.3,242.1L440.0,241.4L439.8,240.7" fill="none" stroke="#0000ff" stroke-width="4" stroke-linejoin="round" stroke-linecap="round"/></g></svg><div style="position:absolute;left:0px;top:722px;width:96px;height:18px;background:transparent;box-shadow:inset 1px 1px #808080, inset -1px -1px #fff;"></div><div style="position:absolute;left:98px;top:722px;width:926px;height:18px;background:transparent;box-shadow:inset 1px 1px #808080, inset -1px -1px #fff;"></div><div style="position:absolute;left:6px;top:725px;white-space:nowrap;font:11px 'Liberation Sans', sans-serif;color:#000;line-height:13px;">Готов</div><div style="position:absolute;left:0px;top:740px;width:1024px;height:28px;background:#d4d0c8;box-shadow:inset 0 1px #d4d0c8, inset 0 2px #fff;"></div><div style="position:absolute;left:2px;top:744px;width:51px;height:22px;background:#d4d0c8;box-shadow:inset 1px 1px #fff, inset -1px -1px #404040, inset -2px -2px #808080;"></div><div style="position:absolute;left:22px;top:748px;white-space:nowrap;font:bold 12px 'Liberation Sans', sans-serif;color:#000;line-height:16px;">Пуск</div><svg style="position:absolute;left:4px;top:747px" width="15" height="14" viewBox="0 0 15 14" ><path d="M1 2q3-1.5 6 0l-0.5 5q-3-1.5-6 0z" fill="#f25022"/><path d="M7.5 2q3 1.5 7 0l-0.5 5q-3.5 1.5-7 0z" fill="#7fba00"/><path d="M0.5 7.5q3-1.5 6 0l-0.5 5q-3-1.5-6 0z" fill="#00a4ef"/><path d="M7 7.5q3.5 1.5 7 0l-0.5 5q-3.5 1.5-7 0z" fill="#ffb900"/></svg><svg style="position:absolute;left:60px;top:746px" width="17" height="17" viewBox="0 0 17 17" ><path d="M1 8.5L8.5 1l7.5 7.5l-7.5 7.5z" fill="#303030"/><path d="M3.5 8.5l5-5l5 5l-5 5z" fill="#fff"/><path d="M14 1.5L4 9.5h5L3 16l11-8.5h-5z" fill="#f5a623" stroke="#8a4a00" stroke-width="0.7" stroke-linejoin="round"/></svg><svg style="position:absolute;left:84px;top:747px" width="16" height="16" viewBox="0 0 16 16" ><rect x="0.5" y="0.5" width="15" height="15" rx="2.5" fill="#2f6fd0"/><rect x="2.5" y="2.5" width="11" height="11" rx="1" fill="#f4f8ff"/><path d="M10.5 4.5a4.2 4.2 0 1 0 0 7" fill="none" stroke="#2f6fd0" stroke-width="2.2"/><path d="M8 8h6" stroke="#e06020" stroke-width="1.5"/></svg><svg style="position:absolute;left:106px;top:746px" width="17" height="17" viewBox="0 0 17 17" ><circle cx="9" cy="9" r="5.5" fill="none" stroke="#2a8be0" stroke-width="3"/><path d="M4 9h10" stroke="#2a8be0" stroke-width="2.5"/><path d="M10 12h5" stroke="#fff" stroke-width="2"/><path d="M1.5 15q7-11 15-13" fill="none" stroke="#7fc0f5" stroke-width="1.4"/></svg><div style="position:absolute;left:143px;top:745px;white-space:nowrap;font:bold 13px 'Liberation Sans', sans-serif;color:#000;line-height:14px;">»</div><div style="position:absolute;left:156px;top:744px;width:159px;height:22px;background:#d4d0c8;box-shadow:inset 1px 1px #fff, inset -1px -1px #404040, inset -2px -2px #808080;"></div><svg style="position:absolute;left:160px;top:747px" width="18" height="16" viewBox="0 0 18 16"><path d="M1 3h6l2 2h8v10H1z" fill="#e8c860" stroke="#9a7a20"/><path d="M1 7h16v8H1z" fill="#f8e090" stroke="#9a7a20"/></svg><div style="position:absolute;left:180px;top:748px;white-space:nowrap;font:11px 'Liberation Sans', sans-serif;color:#000;line-height:14px;">AG</div><div style="position:absolute;left:318px;top:744px;width:160px;height:22px;background-color:#fff;background-image:repeating-conic-gradient(#d4d0c8 0 25%, #fff 0 50%);background-size:2px 2px;box-shadow:inset 1px 1px #404040, inset 2px 2px #808080, inset -1px -1px #fff;"></div><svg style="position:absolute;left:324px;top:747px" width="16" height="16" viewBox="0 0 16 16"><rect x="0.5" y="0.5" width="15" height="15" fill="#c8c8c8" stroke="#888"/><path d="M8 2v12M2 8h12" stroke="#333"/><circle cx="6.5" cy="7.5" r="4" fill="none" stroke="#e04060"/><path d="M3 13L13 3" stroke="#6060ff"/></svg><div style="position:absolute;left:344px;top:749px;white-space:nowrap;font:bold 12px 'Liberation Sans', sans-serif;color:#000;line-height:14px;letter-spacing:-0.1px;">Advanced Grapher - [...</div><div style="position:absolute;left:481px;top:744px;width:160px;height:22px;background:#d4d0c8;box-shadow:inset 1px 1px #fff, inset -1px -1px #404040, inset -2px -2px #808080;"></div><svg style="position:absolute;left:486px;top:747px" width="16" height="16" viewBox="0 0 16 16"><ellipse cx="8" cy="8" rx="6.5" ry="5" transform="rotate(-35 8 8)" fill="none" stroke="#e0a020" stroke-width="2.2"/></svg><div style="position:absolute;left:506px;top:748px;white-space:nowrap;font:11px 'Liberation Sans', sans-serif;color:#000;line-height:14px;letter-spacing:-0.2px;">ACD FotoCanvas v3.0</div><div style="position:absolute;left:924px;top:744px;width:97px;height:21px;background:transparent;box-shadow:inset 1px 1px #808080, inset -1px -1px #fff;"></div><div style="position:absolute;left:986px;top:748px;white-space:nowrap;font:11px 'Liberation Sans', sans-serif;color:#000;line-height:14px;">16:44</div><svg style="position:absolute;left:926px;top:747px" width="17" height="16" viewBox="0 0 17 16" ><path d="M1 8L8 1l8 7l-8 8z" fill="#505050"/><path d="M14 1.5L4 9.5h5L3 16l11-8.5h-5z" fill="#f0a030" stroke="#8a4a00" stroke-width="0.7" stroke-linejoin="round"/></svg><svg style="position:absolute;left:944px;top:747px" width="17" height="16" viewBox="0 0 17 16" ><path d="M3 12q-3-5 2-9q5-3 10 1q3 4-1 8q-5 4-11 0z" fill="#fff" stroke="#000" stroke-width="1.2"/><path d="M5 6q1 3 4 4" fill="none" stroke="#000"/><circle cx="5" cy="10" r="1.3" fill="#e00000"/></svg><svg style="position:absolute;left:962px;top:747px" width="18" height="16" viewBox="0 0 18 16" ><rect x="5" y="1" width="6" height="14" fill="#fff" stroke="#000"/><path d="M1 7h16" stroke="#000" stroke-width="2"/><circle cx="12.5" cy="7.5" r="3" fill="#e0e000" stroke="#000" stroke-width="0.8"/><path d="M7 11h3v3h-3z" fill="none" stroke="#000"/></svg>
</body></html>
